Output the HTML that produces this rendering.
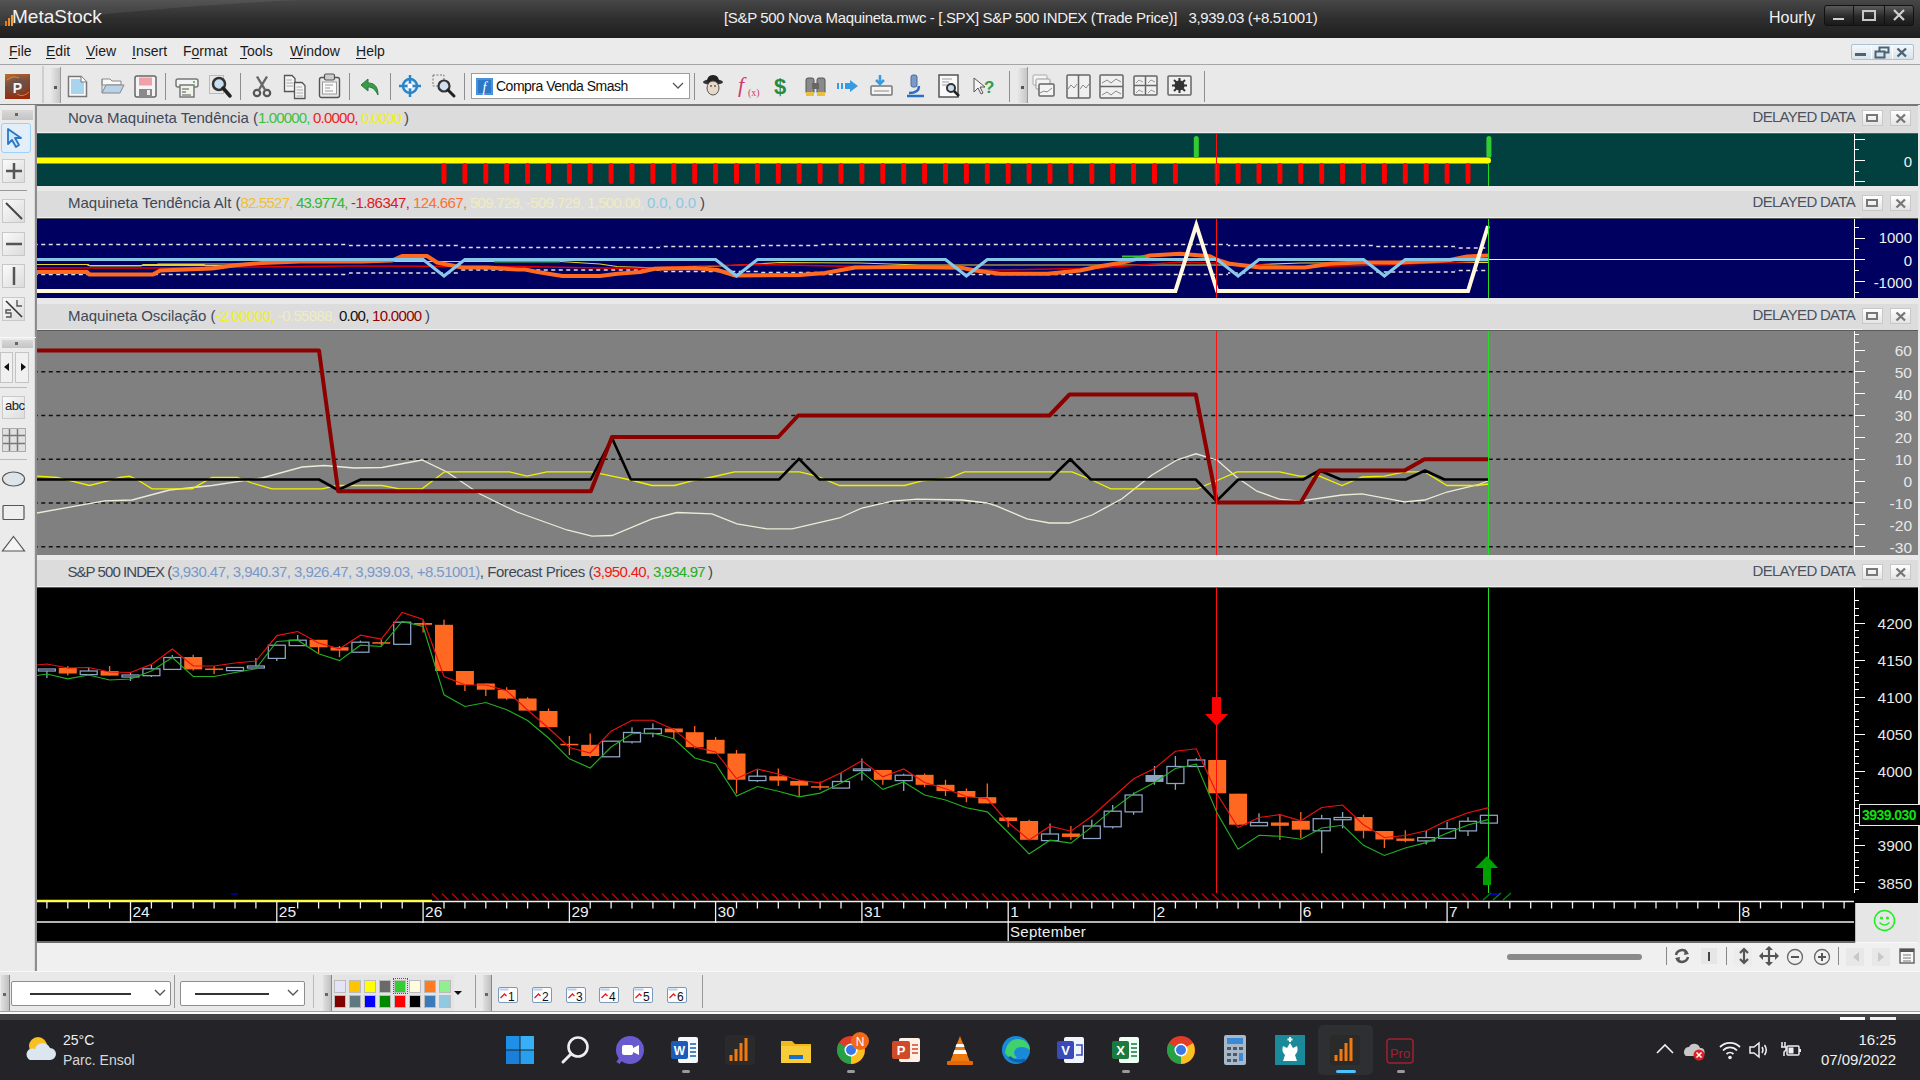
<!DOCTYPE html><html><head><meta charset="utf-8"><title>MetaStock</title><style>
*{margin:0;padding:0;box-sizing:border-box}
html,body{width:1920px;height:1080px;overflow:hidden;background:#e9e9e9;font-family:"Liberation Sans",sans-serif}
body{position:relative}
.a{position:absolute}
.t{position:absolute;white-space:nowrap;line-height:1}
u{text-decoration:underline;text-underline-offset:2px}
svg{position:absolute;overflow:visible}
</style></head><body>
<div class="a" style="left:0px;top:0px;width:1920px;height:38px;background:linear-gradient(#474747,#2e2e2e 50%,#1f1f1f)"></div>
<svg style="left:0;top:0" width="1920" height="38"><path d="M0 0 H300 Q160 6 0 26 Z" fill="#ffffff" opacity="0.07"/></svg>
<svg style="left:5px;top:12px" width="10" height="14"><rect x="0" y="9" width="2" height="5" fill="#e07a10"/><rect x="3" y="6" width="2" height="8" fill="#f08a20"/><rect x="6" y="3" width="2" height="11" fill="#f5a030"/></svg>
<div class="t" style="left:12px;top:7px;font-size:19px;color:#f2f2f2;">MetaStock</div>
<div class="t" style="left:724px;top:10px;font-size:15px;color:#f0f0f0;letter-spacing:-0.35px">[S&amp;P 500 Nova Maquineta.mwc - [.SPX] S&amp;P 500 INDEX (Trade Price)]&nbsp;&nbsp; 3,939.03 (+8.51001)</div>
<div class="t" style="left:1769px;top:10px;font-size:16px;color:#f0f0f0;">Hourly</div>
<div class="a" style="left:1824px;top:5px;width:90px;height:21px;border:1px solid #111;border-radius:3px;background:linear-gradient(#5a5a5a,#2a2a2a 55%,#1a1a1a)"></div>
<div class="a" style="left:1853px;top:6px;width:1px;height:19px;background:#111"></div>
<div class="a" style="left:1884px;top:6px;width:1px;height:19px;background:#111"></div>
<div class="a" style="left:1833px;top:18px;width:11px;height:2px;background:#d0d0d0"></div>
<div class="a" style="left:1862px;top:10px;width:14px;height:11px;border:2px solid #c8c8c8"></div>
<svg style="left:1893px;top:9px" width="12" height="12"><path d="M1 1L11 11M11 1L1 11" stroke="#d0d0d0" stroke-width="2.2"/></svg>
<div class="a" style="left:0px;top:38px;width:1920px;height:26px;background:#ebebeb"></div>
<div class="t" style="left:9px;top:44px;font-size:14px;color:#1a1a1a;"><u>F</u>ile</div>
<div class="t" style="left:46px;top:44px;font-size:14px;color:#1a1a1a;"><u>E</u>dit</div>
<div class="t" style="left:86px;top:44px;font-size:14px;color:#1a1a1a;"><u>V</u>iew</div>
<div class="t" style="left:132px;top:44px;font-size:14px;color:#1a1a1a;"><u>I</u>nsert</div>
<div class="t" style="left:183px;top:44px;font-size:14px;color:#1a1a1a;">F<u>o</u>rmat</div>
<div class="t" style="left:240px;top:44px;font-size:14px;color:#1a1a1a;"><u>T</u>ools</div>
<div class="t" style="left:290px;top:44px;font-size:14px;color:#1a1a1a;"><u>W</u>indow</div>
<div class="t" style="left:356px;top:44px;font-size:14px;color:#1a1a1a;"><u>H</u>elp</div>
<div class="a" style="left:1851px;top:44px;width:63px;height:16px;border:1px solid #a9c2d4;border-radius:2px;background:linear-gradient(#f4f8fb,#d6e3ec)"></div>
<div class="a" style="left:1871px;top:45px;width:1px;height:14px;background:#fff"></div>
<div class="a" style="left:1892px;top:45px;width:1px;height:14px;background:#fff"></div>
<div class="a" style="left:1855px;top:53px;width:11px;height:3px;background:#4c6272"></div>
<svg style="left:1874px;top:46px" width="16" height="13"><rect x="5.5" y="1.5" width="9" height="5" fill="none" stroke="#4c6272" stroke-width="2"/><rect x="1.5" y="5.5" width="9" height="6" fill="#d8e4ec" stroke="#4c6272" stroke-width="2"/></svg>
<svg style="left:1896px;top:47px" width="12" height="11"><path d="M1.5 1.5L10 9.5M10 1.5L1.5 9.5" stroke="#4c6272" stroke-width="2.4"/></svg>
<div class="a" style="left:0px;top:64px;width:1920px;height:1px;background:#a6a6a6"></div>
<div class="a" style="left:0px;top:65px;width:1920px;height:39px;background:#e9e9e9"></div>
<div class="a" style="left:0px;top:104px;width:1920px;height:1px;background:#7a7a7a"></div>
<svg style="left:5px;top:74px" width="25" height="25"><defs><linearGradient id="pg" x1="0" y1="0" x2="0.3" y2="1"><stop offset="0" stop-color="#c46a28"/><stop offset="0.5" stop-color="#7a4a38"/><stop offset="1" stop-color="#9a2a0a"/></linearGradient><radialGradient id="pg2" cx="0.5" cy="0.45" r="0.5"><stop offset="0" stop-color="#505050" stop-opacity="0.9"/><stop offset="1" stop-color="#606060" stop-opacity="0"/></radialGradient></defs><rect width="25" height="25" fill="url(#pg)"/><rect width="25" height="25" fill="url(#pg2)"/><path d="M2 6Q8 1 14 4M12 20Q18 24 24 18" stroke="#e8a060" stroke-width="1" fill="none" opacity=".7"/><text x="12.5" y="18.5" font-family="Liberation Sans" font-weight="bold" font-size="14" fill="#f4f4f4" text-anchor="middle">P</text></svg>
<div class="a" style="left:42px;top:66px;width:2px;height:37px;background:#cfcfcf"></div>
<div class="a" style="left:51px;top:68px;width:9px;height:35px;background:linear-gradient(90deg,#e6e6e6,#c6c6c6)"></div>
<div class="a" style="left:54px;top:86px;width:3px;height:3px;background:#555"></div>
<div class="a" style="left:60px;top:67px;width:1px;height:36px;background:#9a9a9a"></div>
<svg style="left:67px;top:75px" width="26" height="26"><path d="M1.5 1.5H14L19.5 7V21.5H1.5Z" fill="#fafafa" stroke="#777" stroke-width="1.5"/><path d="M4 4H13L17 8V19H4Z" fill="#a8d4ee"/><path d="M14 1.5V7H19.5" fill="#fff" stroke="#777" stroke-width="1"/></svg>
<svg style="left:101px;top:77px" width="26" height="26"><path d="M1 2H9L11 4H20V8H1Z" fill="#f8f8f8" stroke="#888" stroke-width="1"/><path d="M1 16L5 8H23L19 16Z" fill="#b8d2e8" stroke="#888" stroke-width="1"/><path d="M1 2V16" stroke="#888"/></svg>
<svg style="left:134px;top:75px" width="26" height="26"><rect x="1" y="1" width="21" height="21" rx="2" fill="#f4f4f4" stroke="#666" stroke-width="1.5"/><rect x="5" y="2.5" width="13" height="8" fill="#f0a0a8"/><rect x="5" y="14" width="13" height="7" fill="#8a8a8a"/><rect x="13" y="15" width="3" height="5" fill="#eee"/></svg>
<svg style="left:175px;top:76px" width="26" height="26"><rect x="1" y="3" width="22" height="8" rx="2" fill="#f4f4f4" stroke="#777" stroke-width="1.5"/><rect x="5" y="9" width="14" height="12" fill="#eef5e8" stroke="#777" stroke-width="1.5"/><path d="M7 13H14M7 16H11M7 19H16" stroke="#555" stroke-width="1"/><rect x="18" y="5" width="2" height="2" fill="#5c5"/></svg>
<svg style="left:209px;top:75px" width="26" height="26"><rect x="0.5" y="0.5" width="14" height="18" fill="#e8e8e8" stroke="#bbb"/><circle cx="10" cy="9" r="6" fill="#c8dff0" stroke="#333" stroke-width="2.5"/><path d="M14 13L21 21" stroke="#222" stroke-width="3.5" stroke-linecap="round"/></svg>
<svg style="left:252px;top:75px" width="26" height="26"><circle cx="5" cy="18" r="3.2" fill="none" stroke="#555" stroke-width="2.2"/><circle cx="15" cy="18" r="3.2" fill="none" stroke="#555" stroke-width="2.2"/><path d="M6.5 15.5L15 1.5M13.5 15.5L5 1.5" stroke="#666" stroke-width="2.4"/></svg>
<svg style="left:283px;top:74px" width="26" height="26"><path d="M1.5 1.5H9L12 4.5V17.5H1.5Z" fill="#f4f4f4" stroke="#555" stroke-width="1.3"/><path d="M3.5 6H9M3.5 9H10M3.5 12H10" stroke="#aaa"/><path d="M11.5 8.5H19L22 11.5V24.5H11.5Z" fill="#f4f4f4" stroke="#555" stroke-width="1.3"/><path d="M13.5 13H19M13.5 16H20M13.5 19H20M13.5 22H20" stroke="#aaa"/></svg>
<svg style="left:318px;top:73px" width="26" height="26"><rect x="1.5" y="4.5" width="20" height="20" rx="2" fill="#e8e8e8" stroke="#555" stroke-width="1.4"/><rect x="6.5" y="1" width="10" height="6" rx="1.5" fill="#ccc" stroke="#555" stroke-width="1.2"/><rect x="4.5" y="9" width="14" height="12" fill="#fafafa" stroke="#999"/><path d="M7 12H15M7 15H12M7 18H15" stroke="#999"/></svg>
<svg style="left:360px;top:76px" width="26" height="26"><path d="M18 19C18 10 14 7 8 7V3L1 9L8 15V11C12 11 15 13 18 19Z" fill="#3a9a4a" stroke="#2a7a3a" stroke-width="1"/></svg>
<svg style="left:399px;top:74px" width="26" height="26"><circle cx="11" cy="12" r="7" fill="#e0eef8" stroke="#2a84c8" stroke-width="2.5"/><path d="M11 1V23M0 12H22" stroke="#2a84c8" stroke-width="2.5"/><circle cx="11" cy="12" r="2.5" fill="#fff"/></svg>
<svg style="left:432px;top:74px" width="26" height="26"><rect x="1" y="1" width="11" height="11" fill="none" stroke="#777" stroke-dasharray="2 1.5"/><circle cx="12" cy="12" r="5.5" fill="#cfe0ee" stroke="#333" stroke-width="2.2"/><path d="M16 16L22 22" stroke="#222" stroke-width="3" stroke-linecap="round"/></svg>
<div class="a" style="left:165px;top:73px;width:1px;height:27px;background:#8e8e8e"></div>
<div class="a" style="left:240px;top:73px;width:1px;height:27px;background:#8e8e8e"></div>
<div class="a" style="left:349px;top:73px;width:1px;height:27px;background:#8e8e8e"></div>
<div class="a" style="left:390px;top:73px;width:1px;height:27px;background:#8e8e8e"></div>
<div class="a" style="left:464px;top:73px;width:1px;height:27px;background:#8e8e8e"></div>
<div class="a" style="left:471px;top:73px;width:219px;height:26px;background:#fff;border:1px solid #9c9c9c"></div>
<svg style="left:476px;top:78px" width="17" height="17"><rect width="17" height="17" fill="#2c78c8"/><rect x="1" y="1" width="15" height="15" fill="none" stroke="#6aa8e8" stroke-width="1"/><text x="8.5" y="14" font-family="Liberation Serif" font-style="italic" font-size="14" fill="#fff" text-anchor="middle">f</text></svg>
<div class="t" style="left:496px;top:79px;font-size:14px;color:#111;letter-spacing:-0.5px">Compra Venda Smash</div>
<svg style="left:672px;top:82px" width="12" height="8"><path d="M1 1L6 6L11 1" fill="none" stroke="#555" stroke-width="1.3"/></svg>
<div class="a" style="left:694px;top:73px;width:1px;height:27px;background:#8e8e8e"></div>
<svg style="left:702px;top:74px" width="26" height="26"><ellipse cx="11" cy="8" rx="10" ry="3" fill="#333"/><path d="M5 8Q5 1 11 1Q17 1 17 8Z" fill="#222"/><ellipse cx="11" cy="14" rx="6" ry="7" fill="#e8d8c8" stroke="#555"/><path d="M8 12H10M12 12H14" stroke="#222"/></svg>
<svg style="left:737px;top:74px" width="26" height="26"><text x="1" y="18" font-family="Liberation Serif" font-style="italic" font-size="22" fill="#d03a6a">f</text><text x="11" y="22" font-family="Liberation Serif" font-size="10" fill="#d03a6a">(x)</text></svg>
<svg style="left:772px;top:74px" width="26" height="26"><text x="2" y="20" font-family="Liberation Sans" font-weight="bold" font-size="22" fill="#2a8a3a">$</text></svg>
<svg style="left:804px;top:74px" width="26" height="26"><rect x="2" y="4" width="8" height="16" rx="2" fill="#8a8a8a" stroke="#555"/><rect x="13" y="4" width="8" height="16" rx="2" fill="#8a8a8a" stroke="#555"/><rect x="8" y="9" width="7" height="6" fill="#666"/><rect x="2" y="18" width="8" height="4" fill="#e8c040"/><rect x="13" y="18" width="8" height="4" fill="#e8c040"/></svg>
<svg style="left:836px;top:74px" width="26" height="26"><path d="M1 9H3V15H1ZM5 9H7V15H5ZM9 9H14V6L22 12L14 18V15H9Z" fill="#3a9ae0"/></svg>
<svg style="left:870px;top:74px" width="26" height="26"><path d="M10 1V9M6 6L10 10L14 6" stroke="#3a9ae0" stroke-width="2.5" fill="none"/><rect x="1" y="12" width="21" height="9" rx="1" fill="#f4f4f4" stroke="#777" stroke-width="1.5"/><path d="M4 17H19" stroke="#888"/></svg>
<svg style="left:904px;top:74px" width="26" height="26"><rect x="7" y="1" width="6" height="12" rx="2" fill="#7a9ac8" stroke="#4a6a9a"/><path d="M3 22H20M5 19Q15 19 15 12" stroke="#2a70c0" stroke-width="2.5" fill="none"/></svg>
<svg style="left:938px;top:74px" width="26" height="26"><rect x="1" y="1" width="19" height="22" fill="#fafafa" stroke="#555" stroke-width="1.5"/><path d="M4 5H14M4 8H11M4 11H9" stroke="#99a"/><circle cx="13" cy="14" r="4" fill="#c8dff0" stroke="#333" stroke-width="2"/><path d="M16 17L21 22" stroke="#222" stroke-width="2.5"/></svg>
<svg style="left:972px;top:74px" width="26" height="26"><path d="M2 4L2 18L6 14L9 20L11 19L8 13H13Z" fill="#f4f4f4" stroke="#555" stroke-width="1"/><text x="12" y="19" font-family="Liberation Sans" font-weight="bold" font-size="17" fill="#3a9a3a">?</text></svg>
<div class="a" style="left:1009px;top:71px;width:1px;height:31px;background:#8e8e8e"></div>
<div class="a" style="left:1018px;top:68px;width:9px;height:35px;background:linear-gradient(90deg,#e6e6e6,#c6c6c6)"></div>
<div class="a" style="left:1021px;top:86px;width:3px;height:3px;background:#555"></div>
<div class="a" style="left:1027px;top:67px;width:1px;height:36px;background:#9a9a9a"></div>
<svg style="left:1032px;top:74px" width="26" height="26"><rect x="1" y="1" width="14" height="10" rx="1" fill="#f4f4f4" stroke="#aaa"/><rect x="4" y="5" width="14" height="10" rx="1" fill="#f4f4f4" stroke="#999"/><rect x="7" y="10" width="15" height="12" rx="1" fill="#f4f4f4" stroke="#666" stroke-width="1.5"/><path d="M8 19L12 17L15 18L20 14" stroke="#888" fill="none"/></svg>
<svg style="left:1066px;top:74px" width="26" height="26"><rect x="1" y="1" width="23" height="23" rx="1" fill="#f0f0f0" stroke="#666" stroke-width="1.5"/><path d="M12.5 1V24" stroke="#666" stroke-width="1.5"/><path d="M2 15L5 11L8 14L11 10M14 15L17 11L20 14L23 10" stroke="#888" fill="none"/></svg>
<svg style="left:1099px;top:74px" width="26" height="26"><rect x="1" y="1" width="23" height="23" rx="1" fill="#f0f0f0" stroke="#666" stroke-width="1.5"/><path d="M1 12.5H24" stroke="#666" stroke-width="1.5"/><path d="M3 9L8 6L12 9L17 5L22 8M3 21L8 18L12 21L17 17L22 20" stroke="#888" fill="none"/></svg>
<svg style="left:1133px;top:75px" width="26" height="26"><rect x="1" y="1" width="23" height="19" rx="1" fill="#f0f0f0" stroke="#666" stroke-width="1.5"/><path d="M12.5 1V20M1 10.5H24" stroke="#666" stroke-width="1.5"/><path d="M3 8L6 5L10 7M15 8L18 5L22 7M3 18L6 15L10 17M15 18L18 15L22 17" stroke="#999" fill="none"/></svg>
<svg style="left:1167px;top:75px" width="26" height="26"><rect x="1" y="1" width="23" height="19" rx="1" fill="#f0f0f0" stroke="#666" stroke-width="1.5"/><circle cx="12.5" cy="10.5" r="5" fill="#333"/><circle cx="12.5" cy="10.5" r="2" fill="#f0f0f0"/><path d="M12.5 3V18M5 10.5H20M7 5L18 16M18 5L7 16" stroke="#333" stroke-width="2"/></svg>
<div class="a" style="left:1204px;top:71px;width:1px;height:31px;background:#8e8e8e"></div>
<div class="a" style="left:0px;top:105px;width:36px;height:866px;background:#ebebeb"></div>
<div class="a" style="left:34px;top:105px;width:1px;height:866px;background:#dadada"></div>
<div class="a" style="left:35px;top:105px;width:2px;height:866px;background:#8d8d8d"></div>
<div class="a" style="left:2px;top:110px;width:31px;height:10px;background:linear-gradient(#d8d8d8,#c4c4c4)"></div>
<div class="a" style="left:15px;top:113px;width:3px;height:3px;background:#666"></div>
<div class="a" style="left:1px;top:123px;width:30px;height:30px;border:1px solid #9fd0f5;border-radius:3px;background:#e2eef8"></div>
<svg style="left:5px;top:127px" width="22" height="22"><path d="M3 2L3 17L7 13L11 20L14 18L10 11L16 11Z" fill="#cfe6f8" stroke="#2a78c8" stroke-width="1.8" stroke-linejoin="round"/></svg>
<div class="a" style="left:2px;top:159px;width:23px;height:24px;border:1px solid #c8c8c8;background:linear-gradient(135deg,#fafafa,#dcdcdc)"></div>
<svg style="left:2px;top:159px" width="24" height="24"><path d="M12 4V20M4 12H20" stroke="#555" stroke-width="2.5"/></svg>
<div class="a" style="left:0px;top:190px;width:27px;height:1px;background:#999"></div>
<div class="a" style="left:2px;top:199px;width:23px;height:24px;border:1px solid #c8c8c8;background:linear-gradient(135deg,#fafafa,#dcdcdc)"></div>
<svg style="left:2px;top:199px" width="24" height="24"><path d="M4 4L20 20" stroke="#444" stroke-width="2"/></svg>
<div class="a" style="left:2px;top:232px;width:23px;height:24px;border:1px solid #c8c8c8;background:linear-gradient(135deg,#fafafa,#dcdcdc)"></div>
<svg style="left:2px;top:232px" width="24" height="24"><path d="M4 12H20" stroke="#555" stroke-width="2.5"/></svg>
<div class="a" style="left:2px;top:264px;width:23px;height:24px;border:1px solid #c8c8c8;background:linear-gradient(135deg,#fafafa,#dcdcdc)"></div>
<svg style="left:2px;top:264px" width="24" height="24"><path d="M12 3V21" stroke="#555" stroke-width="2.5"/></svg>
<div class="a" style="left:2px;top:297px;width:23px;height:24px;border:1px solid #c8c8c8;background:linear-gradient(135deg,#fafafa,#dcdcdc)"></div>
<svg style="left:2px;top:297px" width="24" height="24"><path d="M4 4L20 20" stroke="#333" stroke-width="1.6"/><path d="M15 3V9H20" stroke="#555" stroke-width="1.4" fill="none"/><path d="M9 13H4V16H9V20H4" stroke="#555" stroke-width="1.4" fill="none"/></svg>
<div class="a" style="left:0px;top:337px;width:36px;height:1px;background:#f8f8f8"></div>
<div class="a" style="left:2px;top:340px;width:31px;height:8px;background:linear-gradient(#d8d8d8,#c4c4c4)"></div>
<div class="a" style="left:15px;top:342px;width:3px;height:3px;background:#666"></div>
<div class="a" style="left:0px;top:352px;width:13px;height:31px;border:1px solid #c4c4c4;background:#f0f0f0"></div>
<div class="a" style="left:15px;top:352px;width:14px;height:31px;border:1px solid #c4c4c4;background:#f0f0f0"></div>
<svg style="left:3px;top:362px" width="8" height="10"><path d="M6 1L1 5L6 9Z" fill="#111"/></svg>
<svg style="left:19px;top:362px" width="8" height="10"><path d="M2 1L7 5L2 9Z" fill="#111"/></svg>
<div class="a" style="left:0px;top:387px;width:27px;height:1px;background:#bbb"></div>
<div class="a" style="left:2px;top:396px;width:23px;height:23px;border:1px solid #c8c8c8;background:linear-gradient(135deg,#fafafa,#dcdcdc)"></div>
<div class="t" style="left:5px;top:399px;font-size:13px;color:#222;font-weight:normal;letter-spacing:-0.5px">abc</div>
<div class="a" style="left:2px;top:428px;width:23px;height:23px;background:#e0e0e0"></div>
<svg style="left:2px;top:428px" width="24" height="24"><path d="M0 7.5H24M0 15.5H24M7.5 0V24M15.5 0V24" stroke="#777" stroke-width="1.5"/><rect x="0.5" y="0.5" width="23" height="23" fill="none" stroke="#aaa"/></svg>
<div class="a" style="left:0px;top:459px;width:27px;height:1px;background:#bbb"></div>
<svg style="left:1px;top:471px" width="26" height="17"><ellipse cx="12.5" cy="8" rx="11" ry="7" fill="#dde4ea" stroke="#555" stroke-width="1.2"/></svg>
<svg style="left:1px;top:504px" width="26" height="18"><rect x="2" y="1.5" width="21" height="14" rx="1" fill="#eee" stroke="#555" stroke-width="1.2"/></svg>
<svg style="left:1px;top:535px" width="26" height="18"><path d="M12.5 1.5L23.5 16H1.5Z" fill="#f4f4f4" stroke="#555" stroke-width="1.2"/></svg>
<div class="a" style="left:37px;top:105px;width:1883px;height:838px;background:#e6e6e6"></div>
<div class="a" style="left:37px;top:105px;width:1881px;height:1px;background:#777"></div>
<div class="a" style="left:1918px;top:105px;width:2px;height:838px;background:#e8e8e8"></div>
<div class="a" style="left:37px;top:106px;width:1881px;height:27px;background:#dcdcdc"></div>
<div class="a" style="left:37px;top:132px;width:1825px;height:1px;background:#f0f0f0"></div>
<div class="a" style="left:37px;top:133px;width:1881px;height:1px;background:#5a5a5a"></div>
<div class="a" style="left:37px;top:134px;width:1881px;height:52px;background:#023f3f"></div>
<div class="t" style="left:1752.5px;top:109.3px;font-size:15px;color:#4a5260;letter-spacing:-0.7px">DELAYED DATA</div>
<div class="a" style="left:1862px;top:110px;width:21px;height:16px;border:1px solid #c8c8c8;background:linear-gradient(#fff,#e4e4e4)"></div>
<div class="a" style="left:1866px;top:114px;width:12px;height:8px;border:2px solid #777"></div>
<div class="a" style="left:1890px;top:110px;width:21px;height:16px;border:1px solid #c8c8c8;background:linear-gradient(#fff,#e4e4e4)"></div>
<svg style="left:1894px;top:113px" width="14" height="11"><path d="M2.5 1.5L11 9.5M11 1.5L2.5 9.5" stroke="#777" stroke-width="2.4"/></svg>
<div class="a" style="left:37px;top:186px;width:1881px;height:5px;background:#e8e8e8"></div>
<div class="a" style="left:37px;top:191px;width:1881px;height:27px;background:#dcdcdc"></div>
<div class="a" style="left:37px;top:217px;width:1825px;height:1px;background:#f0f0f0"></div>
<div class="a" style="left:37px;top:218px;width:1881px;height:1px;background:#5a5a5a"></div>
<div class="a" style="left:37px;top:219px;width:1881px;height:79px;background:#000060"></div>
<div class="t" style="left:1752.5px;top:194.3px;font-size:15px;color:#4a5260;letter-spacing:-0.7px">DELAYED DATA</div>
<div class="a" style="left:1862px;top:195px;width:21px;height:16px;border:1px solid #c8c8c8;background:linear-gradient(#fff,#e4e4e4)"></div>
<div class="a" style="left:1866px;top:199px;width:12px;height:8px;border:2px solid #777"></div>
<div class="a" style="left:1890px;top:195px;width:21px;height:16px;border:1px solid #c8c8c8;background:linear-gradient(#fff,#e4e4e4)"></div>
<svg style="left:1894px;top:198px" width="14" height="11"><path d="M2.5 1.5L11 9.5M11 1.5L2.5 9.5" stroke="#777" stroke-width="2.4"/></svg>
<div class="a" style="left:37px;top:299px;width:1881px;height:5px;background:#e8e8e8"></div>
<div class="a" style="left:37px;top:304px;width:1881px;height:26px;background:#dcdcdc"></div>
<div class="a" style="left:37px;top:329px;width:1825px;height:1px;background:#f0f0f0"></div>
<div class="a" style="left:37px;top:330px;width:1881px;height:1px;background:#5a5a5a"></div>
<div class="a" style="left:37px;top:331px;width:1881px;height:224px;background:#808080"></div>
<div class="t" style="left:1752.5px;top:307.3px;font-size:15px;color:#4a5260;letter-spacing:-0.7px">DELAYED DATA</div>
<div class="a" style="left:1862px;top:308px;width:21px;height:16px;border:1px solid #c8c8c8;background:linear-gradient(#fff,#e4e4e4)"></div>
<div class="a" style="left:1866px;top:312px;width:12px;height:8px;border:2px solid #777"></div>
<div class="a" style="left:1890px;top:308px;width:21px;height:16px;border:1px solid #c8c8c8;background:linear-gradient(#fff,#e4e4e4)"></div>
<svg style="left:1894px;top:311px" width="14" height="11"><path d="M2.5 1.5L11 9.5M11 1.5L2.5 9.5" stroke="#777" stroke-width="2.4"/></svg>
<div class="a" style="left:37px;top:555px;width:1881px;height:5px;background:#e8e8e8"></div>
<div class="a" style="left:37px;top:560px;width:1881px;height:27px;background:#dcdcdc"></div>
<div class="a" style="left:37px;top:586px;width:1825px;height:1px;background:#f0f0f0"></div>
<div class="a" style="left:37px;top:587px;width:1881px;height:1px;background:#5a5a5a"></div>
<div class="a" style="left:37px;top:588px;width:1881px;height:353px;background:#000000"></div>
<div class="t" style="left:1752.5px;top:563.3px;font-size:15px;color:#4a5260;letter-spacing:-0.7px">DELAYED DATA</div>
<div class="a" style="left:1862px;top:564px;width:21px;height:16px;border:1px solid #c8c8c8;background:linear-gradient(#fff,#e4e4e4)"></div>
<div class="a" style="left:1866px;top:568px;width:12px;height:8px;border:2px solid #777"></div>
<div class="a" style="left:1890px;top:564px;width:21px;height:16px;border:1px solid #c8c8c8;background:linear-gradient(#fff,#e4e4e4)"></div>
<svg style="left:1894px;top:567px" width="14" height="11"><path d="M2.5 1.5L11 9.5M11 1.5L2.5 9.5" stroke="#777" stroke-width="2.4"/></svg>
<div class="t" style="left:68px;top:109.5px;font-size:15px;color:#3f4856;letter-spacing:-0.026px">Nova Maquineta Tendência (</div>
<div class="t" style="left:258px;top:109.5px;font-size:15px;color:#3cc03c;letter-spacing:-0.84px">1.00000, </div>
<div class="t" style="left:313px;top:109.5px;font-size:15px;color:#f02020;letter-spacing:-0.777px">0.0000, </div>
<div class="t" style="left:361px;top:109.5px;font-size:15px;color:#f0f020;letter-spacing:-1.0px">0.0000 </div>
<div class="t" style="left:404px;top:109.5px;font-size:15px;color:#3f4856;letter-spacing:0.6px">)</div>
<div class="t" style="left:68px;top:194.5px;font-size:15px;color:#3f4856;letter-spacing:0.006px">Maquineta Tendência Alt (</div>
<div class="t" style="left:240.5px;top:194.5px;font-size:15px;color:#f0c030;letter-spacing:-0.785px">82.5527, </div>
<div class="t" style="left:296px;top:194.5px;font-size:15px;color:#30b830;letter-spacing:-0.84px">43.9774, </div>
<div class="t" style="left:351px;top:194.5px;font-size:15px;color:#e01818;letter-spacing:-0.556px">-1.86347, </div>
<div class="t" style="left:413px;top:194.5px;font-size:15px;color:#ff7030;letter-spacing:-0.618px">124.667, </div>
<div class="t" style="left:470px;top:194.5px;font-size:15px;color:#f0ecc0;letter-spacing:-0.729px">509.729, </div>
<div class="t" style="left:526px;top:194.5px;font-size:15px;color:#f0ecc0;letter-spacing:-0.656px">-509.729, </div>
<div class="t" style="left:587px;top:194.5px;font-size:15px;color:#f0ecc0;letter-spacing:-0.673px">1,500.00, </div>
<div class="t" style="left:647px;top:194.5px;font-size:15px;color:#8cc8e4;letter-spacing:-0.135px">0.0, 0.0 </div>
<div class="t" style="left:700px;top:194.5px;font-size:15px;color:#3f4856;letter-spacing:0.0px">)</div>
<div class="t" style="left:68px;top:307.5px;font-size:15px;color:#3f4856;letter-spacing:-0.093px">Maquineta Oscilação (</div>
<div class="t" style="left:215.3px;top:307.5px;font-size:15px;color:#f0f020;letter-spacing:-0.506px">-2.00000, </div>
<div class="t" style="left:277.8px;top:307.5px;font-size:15px;color:#f0ecc0;letter-spacing:-0.636px">-0.55888, </div>
<div class="t" style="left:339px;top:307.5px;font-size:15px;color:#101010;letter-spacing:-0.755px">0.00, </div>
<div class="t" style="left:372px;top:307.5px;font-size:15px;color:#900000;letter-spacing:-0.674px">10.0000 </div>
<div class="t" style="left:425px;top:307.5px;font-size:15px;color:#3f4856;letter-spacing:0.5px">)</div>
<div class="t" style="left:67.5px;top:563.5px;font-size:15px;color:#3f4856;letter-spacing:-0.948px">S&amp;P 500 INDEX (</div>
<div class="t" style="left:171.4px;top:563.5px;font-size:15px;color:#7898c8;letter-spacing:-0.54px">3,930.47, 3,940.37, 3,926.47, 3,939.03, +8.51001)</div>
<div class="t" style="left:479.8px;top:563.5px;font-size:15px;color:#3f4856;letter-spacing:-0.448px">, Forecast Prices (</div>
<div class="t" style="left:593px;top:563.5px;font-size:15px;color:#f01818;letter-spacing:-0.673px">3,950.40, </div>
<div class="t" style="left:653px;top:563.5px;font-size:15px;color:#20b020;letter-spacing:-0.84px">3,934.97 </div>
<div class="t" style="left:708px;top:563.5px;font-size:15px;color:#3f4856;letter-spacing:0.6px">)</div>
<div class="t" style="left:1850px;width:62px;text-align:right;top:154px;font-size:15px;color:#f0f0f0">0</div>
<div class="t" style="left:1850px;width:62px;text-align:right;top:230px;font-size:15px;color:#f0f0f0">1000</div>
<div class="t" style="left:1850px;width:62px;text-align:right;top:252.5px;font-size:15px;color:#f0f0f0">0</div>
<div class="t" style="left:1850px;width:62px;text-align:right;top:275px;font-size:15px;color:#f0f0f0">-1000</div>
<div class="t" style="left:1850px;width:62px;text-align:right;top:342.9px;font-size:15.5px;color:#e8e8e8">60</div>
<div class="t" style="left:1850px;width:62px;text-align:right;top:364.8px;font-size:15.5px;color:#e8e8e8">50</div>
<div class="t" style="left:1850px;width:62px;text-align:right;top:386.6px;font-size:15.5px;color:#e8e8e8">40</div>
<div class="t" style="left:1850px;width:62px;text-align:right;top:408.4px;font-size:15.5px;color:#e8e8e8">30</div>
<div class="t" style="left:1850px;width:62px;text-align:right;top:430.3px;font-size:15.5px;color:#e8e8e8">20</div>
<div class="t" style="left:1850px;width:62px;text-align:right;top:452.1px;font-size:15.5px;color:#e8e8e8">10</div>
<div class="t" style="left:1850px;width:62px;text-align:right;top:474.0px;font-size:15.5px;color:#e8e8e8">0</div>
<div class="t" style="left:1850px;width:62px;text-align:right;top:495.9px;font-size:15.5px;color:#e8e8e8">-10</div>
<div class="t" style="left:1850px;width:62px;text-align:right;top:517.7px;font-size:15.5px;color:#e8e8e8">-20</div>
<div class="t" style="left:1850px;width:62px;text-align:right;top:539.5px;font-size:15.5px;color:#e8e8e8">-30</div>
<div class="t" style="left:1850px;width:62px;text-align:right;top:616.0px;font-size:15.5px;color:#e8e8e8">4200</div>
<div class="t" style="left:1850px;width:62px;text-align:right;top:653.1px;font-size:15.5px;color:#e8e8e8">4150</div>
<div class="t" style="left:1850px;width:62px;text-align:right;top:690.1px;font-size:15.5px;color:#e8e8e8">4100</div>
<div class="t" style="left:1850px;width:62px;text-align:right;top:727.2px;font-size:15.5px;color:#e8e8e8">4050</div>
<div class="t" style="left:1850px;width:62px;text-align:right;top:764.3px;font-size:15.5px;color:#e8e8e8">4000</div>
<div class="t" style="left:1850px;width:62px;text-align:right;top:838.4px;font-size:15.5px;color:#e8e8e8">3900</div>
<div class="t" style="left:1850px;width:62px;text-align:right;top:875.5px;font-size:15.5px;color:#e8e8e8">3850</div>
<div class="t" style="left:132.5px;top:904px;font-size:15.5px;color:#f0f0f0">24</div>
<div class="t" style="left:278.8px;top:904px;font-size:15.5px;color:#f0f0f0">25</div>
<div class="t" style="left:425.1px;top:904px;font-size:15.5px;color:#f0f0f0">26</div>
<div class="t" style="left:571.4px;top:904px;font-size:15.5px;color:#f0f0f0">29</div>
<div class="t" style="left:717.6px;top:904px;font-size:15.5px;color:#f0f0f0">30</div>
<div class="t" style="left:863.9px;top:904px;font-size:15.5px;color:#f0f0f0">31</div>
<div class="t" style="left:1010.2px;top:904px;font-size:15.5px;color:#f0f0f0">1</div>
<div class="t" style="left:1156.5px;top:904px;font-size:15.5px;color:#f0f0f0">2</div>
<div class="t" style="left:1302.8px;top:904px;font-size:15.5px;color:#f0f0f0">6</div>
<div class="t" style="left:1449.1px;top:904px;font-size:15.5px;color:#f0f0f0">7</div>
<div class="t" style="left:1741.6px;top:904px;font-size:15.5px;color:#f0f0f0">8</div>
<div class="t" style="left:1010px;top:924px;font-size:15px;color:#f0f0f0;letter-spacing:0.3px">September</div>
<div class="a" style="left:1855px;top:903px;width:63px;height:40px;background:#e6e6e6;border-left:1px solid #bbb;border-bottom:1px solid #fafafa"></div>
<svg style="left:1872px;top:908px" width="26" height="26"><circle cx="12.5" cy="12.5" r="10" fill="none" stroke="#22ee22" stroke-width="1.5"/><circle cx="9.5" cy="10" r="1.6" fill="#22ee22"/><circle cx="15.5" cy="10" r="1.6" fill="#22ee22"/><path d="M7.5 14.5Q12.5 19.5 17.5 14.5" stroke="#22ee22" stroke-width="1.5" fill="none"/></svg>
<svg style="left:0;top:0" width="1920" height="1080"><rect x="37" y="157.5" width="1451" height="6" fill="#ffff00"/><circle cx="1488" cy="160.5" r="3" fill="#ffff00"/><rect x="441.5" y="163" width="5" height="21" rx="2.5" fill="#ff0000"/><rect x="462.4" y="163" width="5" height="21" rx="2.5" fill="#ff0000"/><rect x="483.3" y="163" width="5" height="21" rx="2.5" fill="#ff0000"/><rect x="504.2" y="163" width="5" height="21" rx="2.5" fill="#ff0000"/><rect x="525.1" y="163" width="5" height="21" rx="2.5" fill="#ff0000"/><rect x="546.0" y="163" width="5" height="21" rx="2.5" fill="#ff0000"/><rect x="566.9" y="163" width="5" height="21" rx="2.5" fill="#ff0000"/><rect x="587.7" y="163" width="5" height="21" rx="2.5" fill="#ff0000"/><rect x="608.6" y="163" width="5" height="21" rx="2.5" fill="#ff0000"/><rect x="629.5" y="163" width="5" height="21" rx="2.5" fill="#ff0000"/><rect x="650.4" y="163" width="5" height="21" rx="2.5" fill="#ff0000"/><rect x="671.3" y="163" width="5" height="21" rx="2.5" fill="#ff0000"/><rect x="692.2" y="163" width="5" height="21" rx="2.5" fill="#ff0000"/><rect x="713.1" y="163" width="5" height="21" rx="2.5" fill="#ff0000"/><rect x="734.0" y="163" width="5" height="21" rx="2.5" fill="#ff0000"/><rect x="754.9" y="163" width="5" height="21" rx="2.5" fill="#ff0000"/><rect x="775.8" y="163" width="5" height="21" rx="2.5" fill="#ff0000"/><rect x="796.7" y="163" width="5" height="21" rx="2.5" fill="#ff0000"/><rect x="817.6" y="163" width="5" height="21" rx="2.5" fill="#ff0000"/><rect x="838.5" y="163" width="5" height="21" rx="2.5" fill="#ff0000"/><rect x="859.4" y="163" width="5" height="21" rx="2.5" fill="#ff0000"/><rect x="880.3" y="163" width="5" height="21" rx="2.5" fill="#ff0000"/><rect x="901.2" y="163" width="5" height="21" rx="2.5" fill="#ff0000"/><rect x="922.1" y="163" width="5" height="21" rx="2.5" fill="#ff0000"/><rect x="943.0" y="163" width="5" height="21" rx="2.5" fill="#ff0000"/><rect x="963.9" y="163" width="5" height="21" rx="2.5" fill="#ff0000"/><rect x="984.8" y="163" width="5" height="21" rx="2.5" fill="#ff0000"/><rect x="1005.7" y="163" width="5" height="21" rx="2.5" fill="#ff0000"/><rect x="1026.6" y="163" width="5" height="21" rx="2.5" fill="#ff0000"/><rect x="1047.5" y="163" width="5" height="21" rx="2.5" fill="#ff0000"/><rect x="1068.4" y="163" width="5" height="21" rx="2.5" fill="#ff0000"/><rect x="1089.3" y="163" width="5" height="21" rx="2.5" fill="#ff0000"/><rect x="1110.2" y="163" width="5" height="21" rx="2.5" fill="#ff0000"/><rect x="1131.1" y="163" width="5" height="21" rx="2.5" fill="#ff0000"/><rect x="1152.0" y="163" width="5" height="21" rx="2.5" fill="#ff0000"/><rect x="1172.9" y="163" width="5" height="21" rx="2.5" fill="#ff0000"/><rect x="1214.7" y="163" width="5" height="21" rx="2.5" fill="#ff0000"/><rect x="1235.6" y="163" width="5" height="21" rx="2.5" fill="#ff0000"/><rect x="1256.5" y="163" width="5" height="21" rx="2.5" fill="#ff0000"/><rect x="1277.4" y="163" width="5" height="21" rx="2.5" fill="#ff0000"/><rect x="1298.3" y="163" width="5" height="21" rx="2.5" fill="#ff0000"/><rect x="1319.2" y="163" width="5" height="21" rx="2.5" fill="#ff0000"/><rect x="1340.1" y="163" width="5" height="21" rx="2.5" fill="#ff0000"/><rect x="1361.0" y="163" width="5" height="21" rx="2.5" fill="#ff0000"/><rect x="1381.9" y="163" width="5" height="21" rx="2.5" fill="#ff0000"/><rect x="1402.8" y="163" width="5" height="21" rx="2.5" fill="#ff0000"/><rect x="1423.7" y="163" width="5" height="21" rx="2.5" fill="#ff0000"/><rect x="1444.6" y="163" width="5" height="21" rx="2.5" fill="#ff0000"/><rect x="1465.5" y="163" width="5" height="21" rx="2.5" fill="#ff0000"/><rect x="1193.8" y="136" width="5" height="22" rx="2.5" fill="#33cc33"/><rect x="1486.4" y="136" width="5" height="22" rx="2.5" fill="#33cc33"/><line x1="1854.5" y1="134" x2="1854.5" y2="186" stroke="#fff" stroke-width="1"/><line x1="1854" y1="139.5" x2="1865" y2="139.5" stroke="#fff" stroke-width="1"/><line x1="1854" y1="149.5" x2="1859" y2="149.5" stroke="#fff" stroke-width="1"/><line x1="1854" y1="160.5" x2="1865" y2="160.5" stroke="#fff" stroke-width="1"/><line x1="1854" y1="171.5" x2="1859" y2="171.5" stroke="#fff" stroke-width="1"/><line x1="1854" y1="181.5" x2="1865" y2="181.5" stroke="#fff" stroke-width="1"/><line x1="37" y1="244.5" x2="349" y2="244.5" stroke="#e0e0e0" stroke-width="1.5" stroke-dasharray="4 3.5" stroke-dashoffset="3.25"/><line x1="349" y1="245.5" x2="460" y2="245.5" stroke="#e0e0e0" stroke-width="1.5" stroke-dasharray="4 3.5" stroke-dashoffset="0.25"/><line x1="460" y1="247.5" x2="660" y2="247.5" stroke="#e0e0e0" stroke-width="1.5" stroke-dasharray="4 3.5" stroke-dashoffset="6.25"/><line x1="660" y1="246.5" x2="760" y2="246.5" stroke="#e0e0e0" stroke-width="1.5" stroke-dasharray="4 3.5" stroke-dashoffset="3.75"/><line x1="760" y1="245.5" x2="820" y2="245.5" stroke="#e0e0e0" stroke-width="1.5" stroke-dasharray="4 3.5" stroke-dashoffset="6.25"/><line x1="820" y1="244.5" x2="1228" y2="244.5" stroke="#e0e0e0" stroke-width="1.5" stroke-dasharray="4 3.5" stroke-dashoffset="6.25"/><line x1="1228" y1="245.5" x2="1375" y2="245.5" stroke="#e0e0e0" stroke-width="1.5" stroke-dasharray="4 3.5" stroke-dashoffset="1.75"/><line x1="1375" y1="246.5" x2="1455" y2="246.5" stroke="#e0e0e0" stroke-width="1.5" stroke-dasharray="4 3.5" stroke-dashoffset="6.25"/><line x1="1455" y1="248" x2="1488" y2="248" stroke="#e0e0e0" stroke-width="1.5" stroke-dasharray="4 3.5" stroke-dashoffset="3.75"/><line x1="37" y1="274.5" x2="349" y2="274.5" stroke="#e0e0e0" stroke-width="1.5" stroke-dasharray="4 3.5" stroke-dashoffset="3.25"/><line x1="349" y1="273" x2="460" y2="273" stroke="#e0e0e0" stroke-width="1.5" stroke-dasharray="4 3.5" stroke-dashoffset="0.25"/><line x1="460" y1="270" x2="660" y2="270" stroke="#e0e0e0" stroke-width="1.5" stroke-dasharray="4 3.5" stroke-dashoffset="6.25"/><line x1="660" y1="271.5" x2="760" y2="271.5" stroke="#e0e0e0" stroke-width="1.5" stroke-dasharray="4 3.5" stroke-dashoffset="3.75"/><line x1="760" y1="272.5" x2="820" y2="272.5" stroke="#e0e0e0" stroke-width="1.5" stroke-dasharray="4 3.5" stroke-dashoffset="6.25"/><line x1="820" y1="274.5" x2="1228" y2="274.5" stroke="#e0e0e0" stroke-width="1.5" stroke-dasharray="4 3.5" stroke-dashoffset="6.25"/><line x1="1228" y1="273" x2="1375" y2="273" stroke="#e0e0e0" stroke-width="1.5" stroke-dasharray="4 3.5" stroke-dashoffset="1.75"/><line x1="1375" y1="272" x2="1455" y2="272" stroke="#e0e0e0" stroke-width="1.5" stroke-dasharray="4 3.5" stroke-dashoffset="6.25"/><line x1="1455" y1="270.5" x2="1488" y2="270.5" stroke="#e0e0e0" stroke-width="1.5" stroke-dasharray="4 3.5" stroke-dashoffset="3.75"/><polyline points="37.0,264.5 88.0,264.5 88.0,265.5 158.0,265.5 158.0,264.0 249.0,264.0 249.0,265.5 141.0,265.5" fill="none" stroke="#e8d020" stroke-width="1.2" /><polyline points="141.0,265.5 141.0,265.5" fill="none" stroke="#e8d020" stroke-width="1" /><polyline points="37.0,264.5 88.0,264.5 90.0,265.5 158.0,265.5 160.0,264.0 249.0,264.0 251.0,265.5 241.0,265.5" fill="none" stroke="#e8d020" stroke-width="0" /><polyline points="37.0,264.5 88.0,264.5 90.0,266.0 141.0,266.0 143.0,264.5 204.0,264.5 206.0,266.0 241.0,266.0 243.0,264.5 262.0,264.5 262.0,262.5 348.0,262.5 350.0,261.5 560.0,261.5 600.0,264.0 617.0,266.5 645.0,267.5 700.0,267.0 740.0,265.0 780.0,262.5 860.0,263.0 920.0,265.0 1010.0,265.0 1100.0,265.0 1250.0,265.0 1300.0,263.0 1440.0,262.5 1488.0,262.5" fill="none" stroke="#e8d428" stroke-width="1.2" /><polyline points="37.0,268.0 160.0,268.0 200.0,267.5 350.0,266.0 520.0,266.5 600.0,268.0 640.0,268.5 700.0,266.0 760.0,264.5 860.0,266.5 1000.0,270.0 1100.0,268.0 1180.0,262.0 1230.0,263.5 1300.0,267.0 1380.0,265.0 1488.0,261.0" fill="none" stroke="#e00000" stroke-width="1.6" /><polyline points="37.0,272.0 87.0,272.0 89.5,274.5 153.0,274.5 160.0,270.5 212.0,268.5 237.0,265.0 262.0,263.0 300.0,261.5 362.0,261.5 392.0,260.5 402.0,256.0 427.0,256.0 437.0,262.5 462.0,267.5 487.0,267.5 517.0,269.5 525.0,269.5 537.5,272.0 562.5,276.0 600.0,276.0 617.5,273.8 640.0,272.0 655.0,268.8 695.0,268.0 717.5,270.0 735.0,275.5 800.0,275.0 825.0,273.0 855.0,267.5 900.0,267.0 950.0,267.5 960.0,267.5 975.0,270.5 1000.0,273.8 1047.5,273.8 1080.0,270.5 1100.0,266.2 1122.5,262.5 1150.0,255.5 1180.0,253.8 1210.0,256.2 1217.5,260.0 1230.0,263.8 1260.0,267.5 1305.0,267.5 1330.0,263.8 1360.0,262.5 1397.5,262.5 1440.0,260.8 1450.0,260.0 1467.0,256.5 1488.0,255.5" fill="none" stroke="#ff6a20" stroke-width="4" stroke-linejoin="round"/><line x1="1122" y1="256.5" x2="1146" y2="256.5" stroke="#30c030" stroke-width="2"/><line x1="494" y1="261.5" x2="560" y2="261.5" stroke="#30c030" stroke-width="2"/><polyline points="37.0,259.5 423.1,259.5 444.0,276.0 464.9,259.5 715.6,259.5 736.5,276.0 757.4,259.5 945.5,259.5 966.4,276.0 987.3,259.5 1217.2,259.5 1238.1,276.0 1259.0,259.5 1363.5,259.5 1384.4,276.0 1405.3,259.5 1488.0,259.5" fill="none" stroke="#87c8e8" stroke-width="3.2" stroke-linejoin="miter"/><line x1="1488" y1="259.5" x2="1854" y2="259.5" stroke="#f0f0f0" stroke-width="1"/><polyline points="37.0,291.0 1175.4,291.0 1196.3,225.0 1217.2,291.0 1468.0,291.0 1488.0,226.0" fill="none" stroke="#fff8dc" stroke-width="4" stroke-linejoin="miter"/><line x1="1854.5" y1="219" x2="1854.5" y2="298" stroke="#fff" stroke-width="1"/><line x1="1854" y1="227.5" x2="1859" y2="227.5" stroke="#fff" stroke-width="1"/><line x1="1854" y1="238.5" x2="1865" y2="238.5" stroke="#fff" stroke-width="1"/><line x1="1854" y1="248.5" x2="1859" y2="248.5" stroke="#fff" stroke-width="1"/><line x1="1854" y1="259.5" x2="1865" y2="259.5" stroke="#fff" stroke-width="1"/><line x1="1854" y1="270.5" x2="1859" y2="270.5" stroke="#fff" stroke-width="1"/><line x1="1854" y1="281.5" x2="1865" y2="281.5" stroke="#fff" stroke-width="1"/><line x1="1854" y1="292.5" x2="1859" y2="292.5" stroke="#fff" stroke-width="1"/><line x1="37" y1="371.75" x2="1854" y2="371.75" stroke="#111" stroke-width="1.5" stroke-dasharray="4 3.5" stroke-dashoffset="3.25"/><line x1="37" y1="415.5" x2="1854" y2="415.5" stroke="#111" stroke-width="1.5" stroke-dasharray="4 3.5" stroke-dashoffset="3.25"/><line x1="37" y1="459.25" x2="1854" y2="459.25" stroke="#111" stroke-width="1.5" stroke-dasharray="4 3.5" stroke-dashoffset="3.25"/><line x1="37" y1="503" x2="1854" y2="503" stroke="#111" stroke-width="1.5" stroke-dasharray="4 3.5" stroke-dashoffset="3.25"/><line x1="37" y1="546.75" x2="1854" y2="546.75" stroke="#111" stroke-width="1.5" stroke-dasharray="4 3.5" stroke-dashoffset="3.25"/><polyline points="37.0,513.0 104.5,500.8 132.0,500.0 169.5,490.0 212.0,485.5 262.0,478.0 302.0,467.0 324.5,465.5 354.5,468.0 382.0,467.5 422.0,460.0 447.0,472.0 479.5,493.8 517.0,512.0 567.0,530.0 592.0,536.2 612.0,535.5 652.0,518.8 677.0,512.5 712.0,513.8 737.0,523.8 767.0,528.8 792.0,528.8 839.5,518.0 862.0,508.0 892.0,501.2 917.0,499.2 962.0,500.0 987.0,503.0 997.0,506.2 1027.0,518.8 1049.5,523.0 1069.5,523.0 1092.0,515.0 1122.0,498.8 1152.0,475.0 1177.0,460.0 1195.8,453.8 1217.0,460.0 1237.0,477.5 1257.0,491.2 1279.5,499.2 1299.5,501.2 1342.0,495.0 1362.0,493.8 1404.5,501.8 1424.5,500.0 1447.0,492.0 1477.0,485.0 1488.0,481.0" fill="none" stroke="#ecebd8" stroke-width="1.3" /><polyline points="37.0,476.2 57.0,477.5 72.0,481.2 89.5,485.5 107.0,481.2 119.5,477.5 129.5,476.2 137.0,479.5 152.0,488.8 192.0,488.8 212.0,477.5 237.0,477.5 252.0,483.0 272.0,488.8 322.0,488.8 337.0,485.5 382.0,485.5 399.5,488.8 422.0,488.8 444.5,471.8 509.5,471.8 527.0,476.2 547.0,471.8 592.0,471.8 612.0,476.2 630.8,480.0 652.0,485.5 674.5,485.5 692.0,480.8 712.0,477.0 734.5,471.8 799.5,471.8 817.0,476.2 839.5,485.5 904.5,485.5 922.0,480.8 949.5,478.0 964.5,471.8 1072.0,471.8 1092.0,480.0 1110.8,488.8 1197.0,488.8 1217.0,480.5 1237.0,471.8 1279.5,471.8 1299.5,476.2 1319.5,476.2 1342.0,485.5 1362.0,477.0 1384.5,476.2 1404.5,471.8 1424.5,471.8 1447.0,485.5 1477.0,485.5 1488.0,484.0" fill="none" stroke="#f0f000" stroke-width="1.3" /><polyline points="37.0,479.5 319.0,479.5 338.0,490.0 360.8,479.5 590.8,479.5 612.0,438.0 630.8,479.5 779.0,479.5 799.0,458.8 819.5,479.5 1049.5,479.5 1070.2,459.2 1090.8,479.5 1195.8,479.5 1216.5,501.2 1238.2,479.5 1303.2,479.5 1319.5,470.5 1340.8,479.5 1405.8,479.5 1425.0,470.5 1444.5,479.5 1488.0,479.5" fill="none" stroke="#000" stroke-width="2.6" stroke-linejoin="round"/><polyline points="37.0,350.5 319.0,350.5 338.2,491.2 590.8,491.2 612.0,437.0 778.2,437.0 798.2,415.5 1049.5,415.5 1069.5,394.5 1195.8,394.5 1217.0,502.5 1300.8,502.5 1319.5,470.5 1404.5,470.5 1424.5,459.2 1488.0,459.2" fill="none" stroke="#8c0000" stroke-width="4" stroke-linejoin="round"/><line x1="1854.5" y1="331" x2="1854.5" y2="555" stroke="#fff" stroke-width="1"/><line x1="1854" y1="334.5" x2="1859" y2="334.5" stroke="#fff" stroke-width="1"/><line x1="1854" y1="342.5" x2="1859" y2="342.5" stroke="#fff" stroke-width="1"/><line x1="1854" y1="350.5" x2="1865" y2="350.5" stroke="#fff" stroke-width="1"/><line x1="1854" y1="361.5" x2="1859" y2="361.5" stroke="#fff" stroke-width="1"/><line x1="1854" y1="371.5" x2="1865" y2="371.5" stroke="#fff" stroke-width="1"/><line x1="1854" y1="382.5" x2="1859" y2="382.5" stroke="#fff" stroke-width="1"/><line x1="1854" y1="393.5" x2="1865" y2="393.5" stroke="#fff" stroke-width="1"/><line x1="1854" y1="404.5" x2="1859" y2="404.5" stroke="#fff" stroke-width="1"/><line x1="1854" y1="415.5" x2="1865" y2="415.5" stroke="#fff" stroke-width="1"/><line x1="1854" y1="426.5" x2="1859" y2="426.5" stroke="#fff" stroke-width="1"/><line x1="1854" y1="437.5" x2="1865" y2="437.5" stroke="#fff" stroke-width="1"/><line x1="1854" y1="448.5" x2="1859" y2="448.5" stroke="#fff" stroke-width="1"/><line x1="1854" y1="459.5" x2="1865" y2="459.5" stroke="#fff" stroke-width="1"/><line x1="1854" y1="470.5" x2="1859" y2="470.5" stroke="#fff" stroke-width="1"/><line x1="1854" y1="481.5" x2="1865" y2="481.5" stroke="#fff" stroke-width="1"/><line x1="1854" y1="492.5" x2="1859" y2="492.5" stroke="#fff" stroke-width="1"/><line x1="1854" y1="502.5" x2="1865" y2="502.5" stroke="#fff" stroke-width="1"/><line x1="1854" y1="514.5" x2="1859" y2="514.5" stroke="#fff" stroke-width="1"/><line x1="1854" y1="524.5" x2="1865" y2="524.5" stroke="#fff" stroke-width="1"/><line x1="1854" y1="535.5" x2="1859" y2="535.5" stroke="#fff" stroke-width="1"/><line x1="1854" y1="546.5" x2="1865" y2="546.5" stroke="#fff" stroke-width="1"/><line x1="46.9" y1="669.0" x2="46.9" y2="678.0" stroke="#8ea6c6" stroke-width="1.3"/><rect x="38.4" y="669.0" width="17" height="2.0" fill="#000" stroke="#8ea6c6" stroke-width="1.25"/><line x1="67.8" y1="666.0" x2="67.8" y2="675.6" stroke="#ff6820" stroke-width="1.3"/><rect x="58.8" y="668.0" width="18" height="5.5" fill="#ff6820"/><line x1="88.7" y1="668.0" x2="88.7" y2="674.6" stroke="#8ea6c6" stroke-width="1.3"/><rect x="80.2" y="671.0" width="17" height="3.6" fill="#000" stroke="#8ea6c6" stroke-width="1.25"/><line x1="109.6" y1="666.0" x2="109.6" y2="675.6" stroke="#ff6820" stroke-width="1.3"/><rect x="100.6" y="671.0" width="18" height="4.6" fill="#ff6820"/><line x1="130.5" y1="672.5" x2="130.5" y2="681.0" stroke="#8ea6c6" stroke-width="1.3"/><rect x="122.0" y="675.0" width="17" height="2.0" fill="#000" stroke="#8ea6c6" stroke-width="1.25"/><line x1="151.4" y1="665.0" x2="151.4" y2="677.0" stroke="#8ea6c6" stroke-width="1.3"/><rect x="142.9" y="668.8" width="17" height="6.9" fill="#000" stroke="#8ea6c6" stroke-width="1.25"/><line x1="172.3" y1="655.0" x2="172.3" y2="669.4" stroke="#8ea6c6" stroke-width="1.3"/><rect x="163.8" y="657.5" width="17" height="11.9" fill="#000" stroke="#8ea6c6" stroke-width="1.25"/><line x1="193.2" y1="654.8" x2="193.2" y2="670.6" stroke="#ff6820" stroke-width="1.3"/><rect x="184.2" y="657.0" width="18" height="12.4" fill="#ff6820"/><line x1="214.1" y1="666.0" x2="214.1" y2="674.0" stroke="#ff6820" stroke-width="1.3"/><rect x="205.1" y="668.5" width="18" height="1.5" fill="#ff6820"/><line x1="235.0" y1="667.5" x2="235.0" y2="670.6" stroke="#8ea6c6" stroke-width="1.3"/><rect x="226.5" y="667.5" width="17" height="3.1" fill="#000" stroke="#8ea6c6" stroke-width="1.25"/><line x1="255.9" y1="658.0" x2="255.9" y2="668.0" stroke="#8ea6c6" stroke-width="1.3"/><rect x="247.4" y="666.0" width="17" height="2.0" fill="#000" stroke="#8ea6c6" stroke-width="1.25"/><line x1="276.8" y1="645.2" x2="276.8" y2="661.0" stroke="#8ea6c6" stroke-width="1.3"/><rect x="268.3" y="645.2" width="17" height="13.2" fill="#000" stroke="#8ea6c6" stroke-width="1.25"/><line x1="297.7" y1="635.0" x2="297.7" y2="645.6" stroke="#8ea6c6" stroke-width="1.3"/><rect x="289.2" y="640.2" width="17" height="5.4" fill="#000" stroke="#8ea6c6" stroke-width="1.25"/><line x1="318.6" y1="639.8" x2="318.6" y2="653.0" stroke="#ff6820" stroke-width="1.3"/><rect x="309.6" y="639.8" width="18" height="7.5" fill="#ff6820"/><line x1="339.5" y1="646.0" x2="339.5" y2="657.2" stroke="#ff6820" stroke-width="1.3"/><rect x="330.5" y="647.2" width="18" height="3.4" fill="#ff6820"/><line x1="360.4" y1="640.6" x2="360.4" y2="652.2" stroke="#8ea6c6" stroke-width="1.3"/><rect x="351.9" y="642.2" width="17" height="10.0" fill="#000" stroke="#8ea6c6" stroke-width="1.25"/><line x1="381.3" y1="639.4" x2="381.3" y2="645.6" stroke="#ff6820" stroke-width="1.3"/><rect x="372.3" y="642.2" width="18" height="1.5" fill="#ff6820"/><line x1="402.2" y1="622.2" x2="402.2" y2="644.4" stroke="#8ea6c6" stroke-width="1.3"/><rect x="393.7" y="622.2" width="17" height="22.1" fill="#000" stroke="#8ea6c6" stroke-width="1.25"/><line x1="423.1" y1="620.6" x2="423.1" y2="632.5" stroke="#ff6820" stroke-width="1.3"/><rect x="414.1" y="623.0" width="18" height="1.8" fill="#ff6820"/><line x1="444.0" y1="619.8" x2="444.0" y2="671.0" stroke="#ff6820" stroke-width="1.3"/><rect x="435.0" y="624.8" width="18" height="46.2" fill="#ff6820"/><line x1="464.9" y1="671.0" x2="464.9" y2="691.0" stroke="#ff6820" stroke-width="1.3"/><rect x="455.9" y="671.0" width="18" height="13.8" fill="#ff6820"/><line x1="485.8" y1="683.5" x2="485.8" y2="696.0" stroke="#ff6820" stroke-width="1.3"/><rect x="476.8" y="683.5" width="18" height="6.2" fill="#ff6820"/><line x1="506.7" y1="687.2" x2="506.7" y2="699.8" stroke="#ff6820" stroke-width="1.3"/><rect x="497.7" y="689.8" width="18" height="8.8" fill="#ff6820"/><line x1="527.6" y1="697.2" x2="527.6" y2="710.6" stroke="#ff6820" stroke-width="1.3"/><rect x="518.6" y="698.5" width="18" height="12.1" fill="#ff6820"/><line x1="548.5" y1="708.5" x2="548.5" y2="727.2" stroke="#ff6820" stroke-width="1.3"/><rect x="539.5" y="711.0" width="18" height="16.2" fill="#ff6820"/><line x1="569.4" y1="736.0" x2="569.4" y2="755.0" stroke="#ff6820" stroke-width="1.3"/><rect x="560.4" y="743.8" width="18" height="1.5" fill="#ff6820"/><line x1="590.2" y1="733.5" x2="590.2" y2="757.5" stroke="#ff6820" stroke-width="1.3"/><rect x="581.2" y="744.8" width="18" height="11.2" fill="#ff6820"/><line x1="611.1" y1="741.2" x2="611.1" y2="756.9" stroke="#8ea6c6" stroke-width="1.3"/><rect x="602.6" y="741.2" width="17" height="15.6" fill="#000" stroke="#8ea6c6" stroke-width="1.25"/><line x1="632.0" y1="727.2" x2="632.0" y2="743.5" stroke="#8ea6c6" stroke-width="1.3"/><rect x="623.5" y="732.5" width="17" height="9.4" fill="#000" stroke="#8ea6c6" stroke-width="1.25"/><line x1="652.9" y1="723.5" x2="652.9" y2="737.2" stroke="#8ea6c6" stroke-width="1.3"/><rect x="644.4" y="728.8" width="17" height="4.8" fill="#000" stroke="#8ea6c6" stroke-width="1.25"/><line x1="673.8" y1="728.5" x2="673.8" y2="738.8" stroke="#ff6820" stroke-width="1.3"/><rect x="664.8" y="728.5" width="18" height="3.8" fill="#ff6820"/><line x1="694.7" y1="726.0" x2="694.7" y2="748.5" stroke="#ff6820" stroke-width="1.3"/><rect x="685.7" y="732.2" width="18" height="15.0" fill="#ff6820"/><line x1="715.6" y1="737.0" x2="715.6" y2="753.5" stroke="#ff6820" stroke-width="1.3"/><rect x="706.6" y="739.8" width="18" height="13.8" fill="#ff6820"/><line x1="736.5" y1="750.0" x2="736.5" y2="793.5" stroke="#ff6820" stroke-width="1.3"/><rect x="727.5" y="753.5" width="18" height="26.2" fill="#ff6820"/><line x1="757.4" y1="769.4" x2="757.4" y2="781.9" stroke="#8ea6c6" stroke-width="1.3"/><rect x="748.9" y="776.2" width="17" height="4.4" fill="#000" stroke="#8ea6c6" stroke-width="1.25"/><line x1="778.3" y1="768.5" x2="778.3" y2="786.0" stroke="#ff6820" stroke-width="1.3"/><rect x="769.3" y="776.2" width="18" height="4.4" fill="#ff6820"/><line x1="799.2" y1="779.8" x2="799.2" y2="796.2" stroke="#ff6820" stroke-width="1.3"/><rect x="790.2" y="781.0" width="18" height="4.6" fill="#ff6820"/><line x1="820.1" y1="781.5" x2="820.1" y2="789.8" stroke="#ff6820" stroke-width="1.3"/><rect x="811.1" y="786.2" width="18" height="1.5" fill="#ff6820"/><line x1="841.0" y1="773.1" x2="841.0" y2="788.1" stroke="#8ea6c6" stroke-width="1.3"/><rect x="832.5" y="781.5" width="17" height="6.6" fill="#000" stroke="#8ea6c6" stroke-width="1.25"/><line x1="861.9" y1="758.5" x2="861.9" y2="780.6" stroke="#8ea6c6" stroke-width="1.3"/><rect x="853.4" y="769.0" width="17" height="1.6" fill="#000" stroke="#8ea6c6" stroke-width="1.25"/><line x1="882.8" y1="770.0" x2="882.8" y2="784.8" stroke="#ff6820" stroke-width="1.3"/><rect x="873.8" y="770.0" width="18" height="9.8" fill="#ff6820"/><line x1="903.7" y1="773.8" x2="903.7" y2="791.0" stroke="#8ea6c6" stroke-width="1.3"/><rect x="895.2" y="775.2" width="17" height="5.4" fill="#000" stroke="#8ea6c6" stroke-width="1.25"/><line x1="924.6" y1="773.5" x2="924.6" y2="787.2" stroke="#ff6820" stroke-width="1.3"/><rect x="915.6" y="774.8" width="18" height="10.0" fill="#ff6820"/><line x1="945.5" y1="779.8" x2="945.5" y2="796.0" stroke="#ff6820" stroke-width="1.3"/><rect x="936.5" y="784.8" width="18" height="6.2" fill="#ff6820"/><line x1="966.4" y1="788.5" x2="966.4" y2="802.2" stroke="#ff6820" stroke-width="1.3"/><rect x="957.4" y="791.0" width="18" height="6.2" fill="#ff6820"/><line x1="987.3" y1="783.5" x2="987.3" y2="803.5" stroke="#ff6820" stroke-width="1.3"/><rect x="978.3" y="797.2" width="18" height="6.2" fill="#ff6820"/><line x1="1008.2" y1="817.5" x2="1008.2" y2="827.2" stroke="#ff6820" stroke-width="1.3"/><rect x="999.2" y="817.5" width="18" height="3.5" fill="#ff6820"/><line x1="1029.1" y1="819.8" x2="1029.1" y2="839.8" stroke="#ff6820" stroke-width="1.3"/><rect x="1020.1" y="821.0" width="18" height="18.8" fill="#ff6820"/><line x1="1050.0" y1="823.5" x2="1050.0" y2="840.6" stroke="#8ea6c6" stroke-width="1.3"/><rect x="1041.5" y="834.0" width="17" height="6.6" fill="#000" stroke="#8ea6c6" stroke-width="1.25"/><line x1="1070.9" y1="826.0" x2="1070.9" y2="839.8" stroke="#ff6820" stroke-width="1.3"/><rect x="1061.9" y="833.5" width="18" height="3.4" fill="#ff6820"/><line x1="1091.8" y1="819.8" x2="1091.8" y2="838.5" stroke="#8ea6c6" stroke-width="1.3"/><rect x="1083.3" y="826.0" width="17" height="12.5" fill="#000" stroke="#8ea6c6" stroke-width="1.25"/><line x1="1112.7" y1="805.0" x2="1112.7" y2="828.5" stroke="#8ea6c6" stroke-width="1.3"/><rect x="1104.2" y="811.2" width="17" height="15.6" fill="#000" stroke="#8ea6c6" stroke-width="1.25"/><line x1="1133.6" y1="792.5" x2="1133.6" y2="814.8" stroke="#8ea6c6" stroke-width="1.3"/><rect x="1125.1" y="795.0" width="17" height="16.9" fill="#000" stroke="#8ea6c6" stroke-width="1.25"/><line x1="1154.5" y1="766.0" x2="1154.5" y2="784.8" stroke="#8ea6c6" stroke-width="1.3"/><rect x="1145.5" y="775.0" width="18" height="6.9" fill="#8ea6c6"/><line x1="1175.4" y1="756.0" x2="1175.4" y2="789.8" stroke="#8ea6c6" stroke-width="1.3"/><rect x="1166.9" y="766.5" width="17" height="17.0" fill="#000" stroke="#8ea6c6" stroke-width="1.25"/><line x1="1196.3" y1="758.0" x2="1196.3" y2="766.5" stroke="#8ea6c6" stroke-width="1.3"/><rect x="1187.8" y="760.0" width="17" height="6.5" fill="#000" stroke="#8ea6c6" stroke-width="1.25"/><line x1="1217.2" y1="760.0" x2="1217.2" y2="793.3" stroke="#ff6820" stroke-width="1.3"/><rect x="1208.2" y="760.0" width="18" height="33.3" fill="#ff6820"/><line x1="1238.1" y1="793.7" x2="1238.1" y2="824.7" stroke="#ff6820" stroke-width="1.3"/><rect x="1229.1" y="793.7" width="18" height="31.0" fill="#ff6820"/><line x1="1259.0" y1="813.3" x2="1259.0" y2="825.8" stroke="#8ea6c6" stroke-width="1.3"/><rect x="1250.5" y="822.5" width="17" height="3.3" fill="#000" stroke="#8ea6c6" stroke-width="1.25"/><line x1="1279.9" y1="814.0" x2="1279.9" y2="840.0" stroke="#ff6820" stroke-width="1.3"/><rect x="1270.9" y="822.5" width="18" height="3.3" fill="#ff6820"/><line x1="1300.8" y1="812.0" x2="1300.8" y2="838.3" stroke="#ff6820" stroke-width="1.3"/><rect x="1291.8" y="820.8" width="18" height="8.9" fill="#ff6820"/><line x1="1321.7" y1="814.7" x2="1321.7" y2="853.3" stroke="#8ea6c6" stroke-width="1.3"/><rect x="1313.2" y="818.7" width="17" height="12.1" fill="#000" stroke="#8ea6c6" stroke-width="1.25"/><line x1="1342.6" y1="812.0" x2="1342.6" y2="828.3" stroke="#8ea6c6" stroke-width="1.3"/><rect x="1334.1" y="817.5" width="17" height="2.2" fill="#000" stroke="#8ea6c6" stroke-width="1.25"/><line x1="1363.5" y1="814.7" x2="1363.5" y2="838.3" stroke="#ff6820" stroke-width="1.3"/><rect x="1354.5" y="817.0" width="18" height="13.8" fill="#ff6820"/><line x1="1384.4" y1="831.0" x2="1384.4" y2="848.0" stroke="#ff6820" stroke-width="1.3"/><rect x="1375.4" y="831.0" width="18" height="8.5" fill="#ff6820"/><line x1="1405.3" y1="830.2" x2="1405.3" y2="842.2" stroke="#ff6820" stroke-width="1.3"/><rect x="1396.3" y="838.5" width="18" height="2.4" fill="#ff6820"/><line x1="1426.2" y1="830.9" x2="1426.2" y2="844.4" stroke="#8ea6c6" stroke-width="1.3"/><rect x="1417.7" y="837.6" width="17" height="3.3" fill="#000" stroke="#8ea6c6" stroke-width="1.25"/><line x1="1447.1" y1="822.0" x2="1447.1" y2="838.3" stroke="#8ea6c6" stroke-width="1.3"/><rect x="1438.6" y="828.7" width="17" height="9.6" fill="#000" stroke="#8ea6c6" stroke-width="1.25"/><line x1="1468.0" y1="817.2" x2="1468.0" y2="836.1" stroke="#8ea6c6" stroke-width="1.3"/><rect x="1459.5" y="821.3" width="17" height="9.6" fill="#000" stroke="#8ea6c6" stroke-width="1.25"/><line x1="1488.9" y1="815.3" x2="1488.9" y2="823.1" stroke="#8ea6c6" stroke-width="1.3"/><rect x="1480.4" y="815.3" width="17" height="7.8" fill="#000" stroke="#8ea6c6" stroke-width="1.25"/><line x1="1216.5" y1="134" x2="1216.5" y2="186" stroke="#ff1010" stroke-width="1"/><line x1="1488.5" y1="163" x2="1488.5" y2="186" stroke="#22dd22" stroke-width="1"/><line x1="1216.5" y1="219" x2="1216.5" y2="298" stroke="#ff1010" stroke-width="1"/><line x1="1488.5" y1="219" x2="1488.5" y2="298" stroke="#22dd22" stroke-width="1"/><line x1="1216.5" y1="331" x2="1216.5" y2="555" stroke="#ff1010" stroke-width="1"/><line x1="1488.5" y1="331" x2="1488.5" y2="555" stroke="#22dd22" stroke-width="1"/><line x1="1216.5" y1="588" x2="1216.5" y2="893" stroke="#ff1010" stroke-width="1"/><line x1="1488.5" y1="588" x2="1488.5" y2="893" stroke="#22dd22" stroke-width="1"/><polyline points="37.0,675.5 46.9,674.0 67.8,678.8 88.7,675.0 109.6,680.0 130.5,679.0 151.4,671.0 172.3,657.5 193.2,676.5 214.1,676.5 235.0,672.5 255.9,668.8 276.8,641.5 297.7,640.2 318.6,653.8 339.5,660.6 360.4,645.2 381.3,646.5 402.2,621.5 423.1,626.5 444.0,694.8 464.9,706.5 485.8,702.5 506.7,709.7 527.6,720.6 548.5,738.0 569.4,758.8 590.2,768.0 611.1,747.0 632.0,733.8 652.9,733.0 673.8,738.8 694.7,758.0 715.6,763.8 736.5,796.0 757.4,786.5 778.3,791.2 799.2,796.9 820.1,793.1 841.0,783.1 861.9,771.9 882.8,789.4 903.7,781.9 924.6,795.0 945.5,800.0 966.4,807.8 987.3,811.9 1008.2,832.5 1029.1,854.0 1050.0,840.2 1070.9,843.1 1091.8,826.9 1112.7,809.4 1133.6,793.8 1154.5,782.5 1175.4,768.5 1196.3,764.1 1217.2,813.3 1238.1,849.2 1259.0,835.3 1279.9,836.3 1300.8,839.2 1321.7,828.0 1342.6,825.3 1363.5,845.3 1384.4,855.5 1405.3,848.0 1426.2,842.6 1447.1,833.1 1468.0,825.0 1488.9,819.4" fill="none" stroke="#22b022" stroke-width="1.15" /><polyline points="37.0,665.0 46.9,664.0 67.8,668.0 88.7,667.5 109.6,672.0 130.5,672.5 151.4,664.4 172.3,649.0 193.2,666.0 214.1,666.0 235.0,663.0 255.9,661.0 276.8,635.6 297.7,631.5 318.6,643.0 339.5,648.8 360.4,635.2 381.3,639.0 402.2,612.5 423.1,619.4 444.0,676.5 464.9,684.8 485.8,685.0 506.7,690.8 527.6,710.0 548.5,728.0 569.4,747.5 590.2,753.0 611.1,731.2 632.0,720.2 652.9,720.2 673.8,729.4 694.7,746.9 715.6,751.9 736.5,778.5 757.4,769.0 778.3,774.0 799.2,780.2 820.1,782.8 841.0,772.8 861.9,760.6 882.8,776.9 903.7,769.0 924.6,782.5 945.5,788.8 966.4,796.5 987.3,798.8 1008.2,822.5 1029.1,840.0 1050.0,826.2 1070.9,831.2 1091.8,816.2 1112.7,797.5 1133.6,778.8 1154.5,768.5 1175.4,751.2 1196.3,748.8 1217.2,794.2 1238.1,827.5 1259.0,817.5 1279.9,814.7 1300.8,820.8 1321.7,807.5 1342.6,805.0 1363.5,824.7 1384.4,837.5 1405.3,835.5 1426.2,830.7 1447.1,820.6 1468.0,812.8 1488.9,807.6" fill="none" stroke="#ee1010" stroke-width="1.15" /><path d="M1212 697H1221V714H1228L1216.5 726L1205 714H1212Z" fill="#ff0000"/><path d="M1483 885H1491V868H1498L1487 856L1475 868H1483Z" fill="#00a000"/><path d="M432.0 893.5L438.5 900 M442.0 893.5L448.5 900 M452.0 893.5L458.5 900 M462.0 893.5L468.5 900 M472.0 893.5L478.5 900 M482.0 893.5L488.5 900 M492.0 893.5L498.5 900 M502.0 893.5L508.5 900 M512.0 893.5L518.5 900 M522.0 893.5L528.5 900 M532.0 893.5L538.5 900 M542.0 893.5L548.5 900 M552.0 893.5L558.5 900 M562.0 893.5L568.5 900 M572.0 893.5L578.5 900 M582.0 893.5L588.5 900 M592.0 893.5L598.5 900 M602.0 893.5L608.5 900 M612.0 893.5L618.5 900 M622.0 893.5L628.5 900 M632.0 893.5L638.5 900 M642.0 893.5L648.5 900 M652.0 893.5L658.5 900 M662.0 893.5L668.5 900 M672.0 893.5L678.5 900 M682.0 893.5L688.5 900 M692.0 893.5L698.5 900 M702.0 893.5L708.5 900 M712.0 893.5L718.5 900 M722.0 893.5L728.5 900 M732.0 893.5L738.5 900 M742.0 893.5L748.5 900 M752.0 893.5L758.5 900 M762.0 893.5L768.5 900 M772.0 893.5L778.5 900 M782.0 893.5L788.5 900 M792.0 893.5L798.5 900 M802.0 893.5L808.5 900 M812.0 893.5L818.5 900 M822.0 893.5L828.5 900 M832.0 893.5L838.5 900 M842.0 893.5L848.5 900 M852.0 893.5L858.5 900 M862.0 893.5L868.5 900 M872.0 893.5L878.5 900 M882.0 893.5L888.5 900 M892.0 893.5L898.5 900 M902.0 893.5L908.5 900 M912.0 893.5L918.5 900 M922.0 893.5L928.5 900 M932.0 893.5L938.5 900 M942.0 893.5L948.5 900 M952.0 893.5L958.5 900 M962.0 893.5L968.5 900 M972.0 893.5L978.5 900 M982.0 893.5L988.5 900 M992.0 893.5L998.5 900 M1002.0 893.5L1008.5 900 M1012.0 893.5L1018.5 900 M1022.0 893.5L1028.5 900 M1032.0 893.5L1038.5 900 M1042.0 893.5L1048.5 900 M1052.0 893.5L1058.5 900 M1062.0 893.5L1068.5 900 M1072.0 893.5L1078.5 900 M1082.0 893.5L1088.5 900 M1092.0 893.5L1098.5 900 M1102.0 893.5L1108.5 900 M1112.0 893.5L1118.5 900 M1122.0 893.5L1128.5 900 M1132.0 893.5L1138.5 900 M1142.0 893.5L1148.5 900 M1152.0 893.5L1158.5 900 M1162.0 893.5L1168.5 900 M1172.0 893.5L1178.5 900 M1182.0 893.5L1188.5 900 M1192.0 893.5L1198.5 900 M1202.0 893.5L1208.5 900 M1212.0 893.5L1218.5 900 M1222.0 893.5L1228.5 900 M1232.0 893.5L1238.5 900 M1242.0 893.5L1248.5 900 M1252.0 893.5L1258.5 900 M1262.0 893.5L1268.5 900 M1272.0 893.5L1278.5 900 M1282.0 893.5L1288.5 900 M1292.0 893.5L1298.5 900 M1302.0 893.5L1308.5 900 M1312.0 893.5L1318.5 900 M1322.0 893.5L1328.5 900 M1332.0 893.5L1338.5 900 M1342.0 893.5L1348.5 900 M1352.0 893.5L1358.5 900 M1362.0 893.5L1368.5 900 M1372.0 893.5L1378.5 900 M1382.0 893.5L1388.5 900 M1392.0 893.5L1398.5 900 M1402.0 893.5L1408.5 900 M1412.0 893.5L1418.5 900 M1422.0 893.5L1428.5 900 M1432.0 893.5L1438.5 900 M1442.0 893.5L1448.5 900 M1452.0 893.5L1458.5 900 M1462.0 893.5L1468.5 900 M1472.0 893.5L1478.5 900" stroke="#c00000" stroke-width="1.3"/><path d="M1483 900L1491 893M1493 900L1501 893M1503 900L1511 893" stroke="#008800" stroke-width="1.3"/><line x1="1489" y1="894" x2="1499" y2="894" stroke="#0000ff" stroke-width="1.3"/><line x1="231" y1="894" x2="238" y2="894" stroke="#0000c0" stroke-width="1.3"/><line x1="37" y1="900.5" x2="432" y2="900.5" stroke="#ffff00" stroke-width="1.3"/><line x1="1854.5" y1="588" x2="1854.5" y2="893" stroke="#fff" stroke-width="1"/><line x1="1854" y1="600.5" x2="1859" y2="600.5" stroke="#fff" stroke-width="1"/><line x1="1854" y1="608.5" x2="1859" y2="608.5" stroke="#fff" stroke-width="1"/><line x1="1854" y1="615.5" x2="1859" y2="615.5" stroke="#fff" stroke-width="1"/><line x1="1854" y1="623.5" x2="1865" y2="623.5" stroke="#fff" stroke-width="1"/><line x1="1854" y1="630.5" x2="1859" y2="630.5" stroke="#fff" stroke-width="1"/><line x1="1854" y1="637.5" x2="1859" y2="637.5" stroke="#fff" stroke-width="1"/><line x1="1854" y1="645.5" x2="1859" y2="645.5" stroke="#fff" stroke-width="1"/><line x1="1854" y1="652.5" x2="1859" y2="652.5" stroke="#fff" stroke-width="1"/><line x1="1854" y1="660.5" x2="1865" y2="660.5" stroke="#fff" stroke-width="1"/><line x1="1854" y1="667.5" x2="1859" y2="667.5" stroke="#fff" stroke-width="1"/><line x1="1854" y1="674.5" x2="1859" y2="674.5" stroke="#fff" stroke-width="1"/><line x1="1854" y1="682.5" x2="1859" y2="682.5" stroke="#fff" stroke-width="1"/><line x1="1854" y1="689.5" x2="1859" y2="689.5" stroke="#fff" stroke-width="1"/><line x1="1854" y1="697.5" x2="1865" y2="697.5" stroke="#fff" stroke-width="1"/><line x1="1854" y1="704.5" x2="1859" y2="704.5" stroke="#fff" stroke-width="1"/><line x1="1854" y1="711.5" x2="1859" y2="711.5" stroke="#fff" stroke-width="1"/><line x1="1854" y1="719.5" x2="1859" y2="719.5" stroke="#fff" stroke-width="1"/><line x1="1854" y1="726.5" x2="1859" y2="726.5" stroke="#fff" stroke-width="1"/><line x1="1854" y1="734.5" x2="1865" y2="734.5" stroke="#fff" stroke-width="1"/><line x1="1854" y1="741.5" x2="1859" y2="741.5" stroke="#fff" stroke-width="1"/><line x1="1854" y1="749.5" x2="1859" y2="749.5" stroke="#fff" stroke-width="1"/><line x1="1854" y1="756.5" x2="1859" y2="756.5" stroke="#fff" stroke-width="1"/><line x1="1854" y1="763.5" x2="1859" y2="763.5" stroke="#fff" stroke-width="1"/><line x1="1854" y1="771.5" x2="1865" y2="771.5" stroke="#fff" stroke-width="1"/><line x1="1854" y1="778.5" x2="1859" y2="778.5" stroke="#fff" stroke-width="1"/><line x1="1854" y1="786.5" x2="1859" y2="786.5" stroke="#fff" stroke-width="1"/><line x1="1854" y1="793.5" x2="1859" y2="793.5" stroke="#fff" stroke-width="1"/><line x1="1854" y1="800.5" x2="1859" y2="800.5" stroke="#fff" stroke-width="1"/><line x1="1854" y1="808.5" x2="1865" y2="808.5" stroke="#fff" stroke-width="1"/><line x1="1854" y1="815.5" x2="1859" y2="815.5" stroke="#fff" stroke-width="1"/><line x1="1854" y1="823.5" x2="1859" y2="823.5" stroke="#fff" stroke-width="1"/><line x1="1854" y1="830.5" x2="1859" y2="830.5" stroke="#fff" stroke-width="1"/><line x1="1854" y1="838.5" x2="1859" y2="838.5" stroke="#fff" stroke-width="1"/><line x1="1854" y1="845.5" x2="1865" y2="845.5" stroke="#fff" stroke-width="1"/><line x1="1854" y1="852.5" x2="1859" y2="852.5" stroke="#fff" stroke-width="1"/><line x1="1854" y1="860.5" x2="1859" y2="860.5" stroke="#fff" stroke-width="1"/><line x1="1854" y1="867.5" x2="1859" y2="867.5" stroke="#fff" stroke-width="1"/><line x1="1854" y1="875.5" x2="1859" y2="875.5" stroke="#fff" stroke-width="1"/><line x1="1854" y1="882.5" x2="1865" y2="882.5" stroke="#fff" stroke-width="1"/><line x1="1854" y1="889.5" x2="1859" y2="889.5" stroke="#fff" stroke-width="1"/><line x1="37" y1="901.5" x2="1854" y2="901.5" stroke="#f0f0f0" stroke-width="1.3"/><line x1="37" y1="922" x2="1854" y2="922" stroke="#f0f0f0" stroke-width="1.3"/><line x1="46.9" y1="901" x2="46.9" y2="908.5" stroke="#f0f0f0" stroke-width="1.3"/><line x1="67.8" y1="901" x2="67.8" y2="908.5" stroke="#f0f0f0" stroke-width="1.3"/><line x1="88.7" y1="901" x2="88.7" y2="908.5" stroke="#f0f0f0" stroke-width="1.3"/><line x1="109.6" y1="901" x2="109.6" y2="908.5" stroke="#f0f0f0" stroke-width="1.3"/><line x1="130.5" y1="901" x2="130.5" y2="923" stroke="#f0f0f0" stroke-width="1.3"/><line x1="151.4" y1="901" x2="151.4" y2="908.5" stroke="#f0f0f0" stroke-width="1.3"/><line x1="172.3" y1="901" x2="172.3" y2="908.5" stroke="#f0f0f0" stroke-width="1.3"/><line x1="193.2" y1="901" x2="193.2" y2="908.5" stroke="#f0f0f0" stroke-width="1.3"/><line x1="214.1" y1="901" x2="214.1" y2="908.5" stroke="#f0f0f0" stroke-width="1.3"/><line x1="235.0" y1="901" x2="235.0" y2="908.5" stroke="#f0f0f0" stroke-width="1.3"/><line x1="255.9" y1="901" x2="255.9" y2="908.5" stroke="#f0f0f0" stroke-width="1.3"/><line x1="276.8" y1="901" x2="276.8" y2="923" stroke="#f0f0f0" stroke-width="1.3"/><line x1="297.7" y1="901" x2="297.7" y2="908.5" stroke="#f0f0f0" stroke-width="1.3"/><line x1="318.6" y1="901" x2="318.6" y2="908.5" stroke="#f0f0f0" stroke-width="1.3"/><line x1="339.5" y1="901" x2="339.5" y2="908.5" stroke="#f0f0f0" stroke-width="1.3"/><line x1="360.4" y1="901" x2="360.4" y2="908.5" stroke="#f0f0f0" stroke-width="1.3"/><line x1="381.3" y1="901" x2="381.3" y2="908.5" stroke="#f0f0f0" stroke-width="1.3"/><line x1="402.2" y1="901" x2="402.2" y2="908.5" stroke="#f0f0f0" stroke-width="1.3"/><line x1="423.1" y1="901" x2="423.1" y2="923" stroke="#f0f0f0" stroke-width="1.3"/><line x1="444.0" y1="901" x2="444.0" y2="908.5" stroke="#f0f0f0" stroke-width="1.3"/><line x1="464.9" y1="901" x2="464.9" y2="908.5" stroke="#f0f0f0" stroke-width="1.3"/><line x1="485.8" y1="901" x2="485.8" y2="908.5" stroke="#f0f0f0" stroke-width="1.3"/><line x1="506.7" y1="901" x2="506.7" y2="908.5" stroke="#f0f0f0" stroke-width="1.3"/><line x1="527.6" y1="901" x2="527.6" y2="908.5" stroke="#f0f0f0" stroke-width="1.3"/><line x1="548.5" y1="901" x2="548.5" y2="908.5" stroke="#f0f0f0" stroke-width="1.3"/><line x1="569.4" y1="901" x2="569.4" y2="923" stroke="#f0f0f0" stroke-width="1.3"/><line x1="590.2" y1="901" x2="590.2" y2="908.5" stroke="#f0f0f0" stroke-width="1.3"/><line x1="611.1" y1="901" x2="611.1" y2="908.5" stroke="#f0f0f0" stroke-width="1.3"/><line x1="632.0" y1="901" x2="632.0" y2="908.5" stroke="#f0f0f0" stroke-width="1.3"/><line x1="652.9" y1="901" x2="652.9" y2="908.5" stroke="#f0f0f0" stroke-width="1.3"/><line x1="673.8" y1="901" x2="673.8" y2="908.5" stroke="#f0f0f0" stroke-width="1.3"/><line x1="694.7" y1="901" x2="694.7" y2="908.5" stroke="#f0f0f0" stroke-width="1.3"/><line x1="715.6" y1="901" x2="715.6" y2="923" stroke="#f0f0f0" stroke-width="1.3"/><line x1="736.5" y1="901" x2="736.5" y2="908.5" stroke="#f0f0f0" stroke-width="1.3"/><line x1="757.4" y1="901" x2="757.4" y2="908.5" stroke="#f0f0f0" stroke-width="1.3"/><line x1="778.3" y1="901" x2="778.3" y2="908.5" stroke="#f0f0f0" stroke-width="1.3"/><line x1="799.2" y1="901" x2="799.2" y2="908.5" stroke="#f0f0f0" stroke-width="1.3"/><line x1="820.1" y1="901" x2="820.1" y2="908.5" stroke="#f0f0f0" stroke-width="1.3"/><line x1="841.0" y1="901" x2="841.0" y2="908.5" stroke="#f0f0f0" stroke-width="1.3"/><line x1="861.9" y1="901" x2="861.9" y2="923" stroke="#f0f0f0" stroke-width="1.3"/><line x1="882.8" y1="901" x2="882.8" y2="908.5" stroke="#f0f0f0" stroke-width="1.3"/><line x1="903.7" y1="901" x2="903.7" y2="908.5" stroke="#f0f0f0" stroke-width="1.3"/><line x1="924.6" y1="901" x2="924.6" y2="908.5" stroke="#f0f0f0" stroke-width="1.3"/><line x1="945.5" y1="901" x2="945.5" y2="908.5" stroke="#f0f0f0" stroke-width="1.3"/><line x1="966.4" y1="901" x2="966.4" y2="908.5" stroke="#f0f0f0" stroke-width="1.3"/><line x1="987.3" y1="901" x2="987.3" y2="908.5" stroke="#f0f0f0" stroke-width="1.3"/><line x1="1008.2" y1="901" x2="1008.2" y2="941" stroke="#f0f0f0" stroke-width="1.3"/><line x1="1029.1" y1="901" x2="1029.1" y2="908.5" stroke="#f0f0f0" stroke-width="1.3"/><line x1="1050.0" y1="901" x2="1050.0" y2="908.5" stroke="#f0f0f0" stroke-width="1.3"/><line x1="1070.9" y1="901" x2="1070.9" y2="908.5" stroke="#f0f0f0" stroke-width="1.3"/><line x1="1091.8" y1="901" x2="1091.8" y2="908.5" stroke="#f0f0f0" stroke-width="1.3"/><line x1="1112.7" y1="901" x2="1112.7" y2="908.5" stroke="#f0f0f0" stroke-width="1.3"/><line x1="1133.6" y1="901" x2="1133.6" y2="908.5" stroke="#f0f0f0" stroke-width="1.3"/><line x1="1154.5" y1="901" x2="1154.5" y2="923" stroke="#f0f0f0" stroke-width="1.3"/><line x1="1175.4" y1="901" x2="1175.4" y2="908.5" stroke="#f0f0f0" stroke-width="1.3"/><line x1="1196.3" y1="901" x2="1196.3" y2="908.5" stroke="#f0f0f0" stroke-width="1.3"/><line x1="1217.2" y1="901" x2="1217.2" y2="908.5" stroke="#f0f0f0" stroke-width="1.3"/><line x1="1238.1" y1="901" x2="1238.1" y2="908.5" stroke="#f0f0f0" stroke-width="1.3"/><line x1="1259.0" y1="901" x2="1259.0" y2="908.5" stroke="#f0f0f0" stroke-width="1.3"/><line x1="1279.9" y1="901" x2="1279.9" y2="908.5" stroke="#f0f0f0" stroke-width="1.3"/><line x1="1300.8" y1="901" x2="1300.8" y2="923" stroke="#f0f0f0" stroke-width="1.3"/><line x1="1321.7" y1="901" x2="1321.7" y2="908.5" stroke="#f0f0f0" stroke-width="1.3"/><line x1="1342.6" y1="901" x2="1342.6" y2="908.5" stroke="#f0f0f0" stroke-width="1.3"/><line x1="1363.5" y1="901" x2="1363.5" y2="908.5" stroke="#f0f0f0" stroke-width="1.3"/><line x1="1384.4" y1="901" x2="1384.4" y2="908.5" stroke="#f0f0f0" stroke-width="1.3"/><line x1="1405.3" y1="901" x2="1405.3" y2="908.5" stroke="#f0f0f0" stroke-width="1.3"/><line x1="1426.2" y1="901" x2="1426.2" y2="908.5" stroke="#f0f0f0" stroke-width="1.3"/><line x1="1447.1" y1="901" x2="1447.1" y2="923" stroke="#f0f0f0" stroke-width="1.3"/><line x1="1468.0" y1="901" x2="1468.0" y2="908.5" stroke="#f0f0f0" stroke-width="1.3"/><line x1="1488.9" y1="901" x2="1488.9" y2="908.5" stroke="#f0f0f0" stroke-width="1.3"/><line x1="1509.8" y1="901" x2="1509.8" y2="908.5" stroke="#f0f0f0" stroke-width="1.3"/><line x1="1530.7" y1="901" x2="1530.7" y2="908.5" stroke="#f0f0f0" stroke-width="1.3"/><line x1="1551.6" y1="901" x2="1551.6" y2="908.5" stroke="#f0f0f0" stroke-width="1.3"/><line x1="1572.5" y1="901" x2="1572.5" y2="908.5" stroke="#f0f0f0" stroke-width="1.3"/><line x1="1593.4" y1="901" x2="1593.4" y2="908.5" stroke="#f0f0f0" stroke-width="1.3"/><line x1="1614.2" y1="901" x2="1614.2" y2="908.5" stroke="#f0f0f0" stroke-width="1.3"/><line x1="1635.1" y1="901" x2="1635.1" y2="908.5" stroke="#f0f0f0" stroke-width="1.3"/><line x1="1656.0" y1="901" x2="1656.0" y2="908.5" stroke="#f0f0f0" stroke-width="1.3"/><line x1="1676.9" y1="901" x2="1676.9" y2="908.5" stroke="#f0f0f0" stroke-width="1.3"/><line x1="1697.8" y1="901" x2="1697.8" y2="908.5" stroke="#f0f0f0" stroke-width="1.3"/><line x1="1718.7" y1="901" x2="1718.7" y2="908.5" stroke="#f0f0f0" stroke-width="1.3"/><line x1="1739.6" y1="901" x2="1739.6" y2="923" stroke="#f0f0f0" stroke-width="1.3"/><line x1="1760.5" y1="901" x2="1760.5" y2="908.5" stroke="#f0f0f0" stroke-width="1.3"/><line x1="1781.4" y1="901" x2="1781.4" y2="908.5" stroke="#f0f0f0" stroke-width="1.3"/><line x1="1802.3" y1="901" x2="1802.3" y2="908.5" stroke="#f0f0f0" stroke-width="1.3"/><line x1="1823.2" y1="901" x2="1823.2" y2="908.5" stroke="#f0f0f0" stroke-width="1.3"/><line x1="1844.1" y1="901" x2="1844.1" y2="908.5" stroke="#f0f0f0" stroke-width="1.3"/></svg>
<div class="a" style="left:1859px;top:804px;width:61px;height:22px;background:#000;border:1.5px solid #e8e8e8;border-right:none"></div>
<div class="t" style="left:1862px;top:808px;font-size:14px;color:#10e010;letter-spacing:-0.55px;font-weight:bold">3939.030</div>
<div class="a" style="left:37px;top:941px;width:1818px;height:2px;background:#6a6a6a"></div>
<div class="a" style="left:37px;top:943px;width:1883px;height:28px;background:#f0f0f0"></div>
<div class="a" style="left:1507px;top:954px;width:135px;height:6px;background:#8a8a8a;border-radius:3px"></div>
<div class="a" style="left:1666px;top:947px;width:1px;height:18px;background:#888"></div>
<div class="a" style="left:1726px;top:947px;width:1px;height:18px;background:#888"></div>
<div class="a" style="left:1838px;top:947px;width:1px;height:18px;background:#888"></div>
<svg style="left:1673px;top:947px" width="18" height="18"><path d="M3 8A6 6 0 0 1 14 6M15 10A6 6 0 0 1 4 12" stroke="#555" stroke-width="2.5" fill="none"/><path d="M12 2L16 7L11 8Z M6 16L2 11L7 10Z" fill="#555"/></svg>
<div class="a" style="left:1701px;top:948px;width:16px;height:16px;background:#e6e6e6"></div>
<div class="a" style="left:1708px;top:952px;width:2px;height:9px;background:#444"></div>
<div class="a" style="left:1734px;top:948px;width:18px;height:18px;background:#ececec"></div>
<svg style="left:1735px;top:947px" width="18" height="18"><path d="M9 2V16M5 6L9 2L13 6M5 12L9 16L13 12" stroke="#555" stroke-width="2.2" fill="none"/></svg>
<svg style="left:1759px;top:946px" width="20" height="20"><path d="M10 1V19M1 10H19" stroke="#555" stroke-width="2.2"/><path d="M10 0L14 4H6ZM10 20L6 16H14ZM0 10L4 6V14ZM20 10L16 14V6Z" fill="#555"/></svg>
<svg style="left:1786px;top:948px" width="18" height="18"><circle cx="9" cy="9" r="7.5" fill="none" stroke="#666" stroke-width="1.3"/><path d="M5 9H13" stroke="#555" stroke-width="2"/></svg>
<svg style="left:1813px;top:948px" width="18" height="18"><circle cx="9" cy="9" r="7.5" fill="none" stroke="#666" stroke-width="1.3"/><path d="M5 9H13M9 5V13" stroke="#555" stroke-width="2"/></svg>
<div class="a" style="left:1846px;top:948px;width:18px;height:18px;background:#e8e8e8"></div>
<svg style="left:1850px;top:950px" width="12" height="14"><path d="M9 2L3 7L9 12Z" fill="#c8c8c8"/></svg>
<div class="a" style="left:1872px;top:948px;width:18px;height:18px;background:#e8e8e8"></div>
<svg style="left:1875px;top:950px" width="12" height="14"><path d="M3 2L9 7L3 12Z" fill="#c8c8c8"/></svg>
<svg style="left:1899px;top:948px" width="16" height="16"><rect x="1" y="1" width="14" height="14" fill="#f8f8f8" stroke="#555" stroke-width="1.3"/><rect x="1" y="1" width="14" height="3" fill="#555"/><path d="M4 7H12M4 10H12M4 13H12" stroke="#777"/></svg>
<div class="a" style="left:0px;top:971px;width:1920px;height:40px;background:#e9e9e9"></div>
<div class="a" style="left:0px;top:971px;width:1920px;height:1px;background:#f8f8f8"></div>
<div class="a" style="left:0px;top:1011px;width:1920px;height:1px;background:#a0a0a0"></div>
<div class="a" style="left:0px;top:1012px;width:1920px;height:2px;background:#fafafa"></div>
<div class="a" style="left:0px;top:1014px;width:1920px;height:6px;background:#414141"></div>
<div class="a" style="left:1840px;top:1017px;width:25px;height:3px;background:#fafafa"></div>
<div class="a" style="left:1870px;top:1017px;width:26px;height:3px;background:#f0f0f0"></div>
<div class="a" style="left:1px;top:975px;width:8px;height:36px;background:linear-gradient(90deg,#e0e0e0,#c0c0c0)"></div>
<div class="a" style="left:3px;top:993px;width:3px;height:3px;background:#666"></div>
<div class="a" style="left:9px;top:975px;width:1px;height:36px;background:#888"></div>
<div class="a" style="left:11px;top:981px;width:160px;height:25px;background:#fff;border:1px solid #8e8e8e;border-radius:2px"></div>
<div class="a" style="left:30px;top:993px;width:101px;height:2px;background:#333"></div>
<svg style="left:154px;top:989px" width="12" height="8"><path d="M1 1L6 6L11 1" fill="none" stroke="#555" stroke-width="1.4"/></svg>
<div class="a" style="left:174px;top:975px;width:1px;height:33px;background:#999"></div>
<div class="a" style="left:180px;top:981px;width:125px;height:25px;background:#fff;border:1px solid #8e8e8e;border-radius:2px"></div>
<div class="a" style="left:195px;top:993px;width:74px;height:2px;background:#333"></div>
<svg style="left:287px;top:989px" width="12" height="8"><path d="M1 1L6 6L11 1" fill="none" stroke="#555" stroke-width="1.4"/></svg>
<div class="a" style="left:313px;top:975px;width:1px;height:33px;background:#bbb"></div>
<div class="a" style="left:323px;top:975px;width:8px;height:36px;background:linear-gradient(90deg,#e0e0e0,#c0c0c0)"></div>
<div class="a" style="left:325px;top:993px;width:3px;height:3px;background:#666"></div>
<div class="a" style="left:331px;top:975px;width:1px;height:36px;background:#888"></div>
<div class="a" style="left:332px;top:975px;width:122px;height:36px;background:#e4e4e4"></div>
<div class="a" style="left:334px;top:980px;width:12px;height:13px;background:#e4e4f8;border:1px solid #bbb"></div>
<div class="a" style="left:349px;top:980px;width:12px;height:13px;background:#ffc400;border:1px solid #bbb"></div>
<div class="a" style="left:364px;top:980px;width:12px;height:13px;background:#ffff00;border:1px solid #bbb"></div>
<div class="a" style="left:379px;top:980px;width:12px;height:13px;background:#6a6a6a;border:1px solid #bbb"></div>
<div class="a" style="left:394px;top:980px;width:12px;height:13px;background:#33cc33;border:1px solid #bbb"></div>
<div class="a" style="left:409px;top:980px;width:12px;height:13px;background:#fffbe0;border:1px solid #bbb"></div>
<div class="a" style="left:424px;top:980px;width:12px;height:13px;background:#ff7a20;border:1px solid #bbb"></div>
<div class="a" style="left:439px;top:980px;width:12px;height:13px;background:#90f090;border:1px solid #bbb"></div>
<div class="a" style="left:334px;top:995px;width:12px;height:13px;background:#800000;border:1px solid #bbb"></div>
<div class="a" style="left:349px;top:995px;width:12px;height:13px;background:#607880;border:1px solid #bbb"></div>
<div class="a" style="left:364px;top:995px;width:12px;height:13px;background:#0000ff;border:1px solid #bbb"></div>
<div class="a" style="left:379px;top:995px;width:12px;height:13px;background:#008800;border:1px solid #bbb"></div>
<div class="a" style="left:394px;top:995px;width:12px;height:13px;background:#ff0000;border:1px solid #bbb"></div>
<div class="a" style="left:409px;top:995px;width:12px;height:13px;background:#000000;border:1px solid #bbb"></div>
<div class="a" style="left:424px;top:995px;width:12px;height:13px;background:#3a7ab8;border:1px solid #bbb"></div>
<div class="a" style="left:439px;top:995px;width:12px;height:13px;background:#90c8e0;border:1px solid #bbb"></div>
<div class="a" style="left:393px;top:978px;width:15px;height:16px;border:1px dotted #555"></div>
<svg style="left:453px;top:990px" width="10" height="6"><path d="M1 1H9L5 5Z" fill="#111"/></svg>
<div class="a" style="left:475px;top:975px;width:1px;height:33px;background:#999"></div>
<div class="a" style="left:483px;top:975px;width:8px;height:36px;background:linear-gradient(90deg,#e0e0e0,#c0c0c0)"></div>
<div class="a" style="left:485px;top:993px;width:3px;height:3px;background:#666"></div>
<div class="a" style="left:491px;top:975px;width:1px;height:36px;background:#888"></div>
<svg style="left:498.0px;top:985px" width="22" height="20"><rect x="0.5" y="2.5" width="19" height="15" rx="1.5" fill="#fdfdff" stroke="#7a9ab8" stroke-width="1"/><rect x="1.5" y="3.5" width="9" height="2" fill="#b8d0e8"/><path d="M2.5 13L6.5 9L8.5 11" stroke="#e02020" stroke-width="1.4" fill="none"/><text x="10" y="16" font-family="Liberation Sans" font-size="12" fill="#111">1</text></svg>
<svg style="left:531.8px;top:985px" width="22" height="20"><rect x="0.5" y="2.5" width="19" height="15" rx="1.5" fill="#fdfdff" stroke="#7a9ab8" stroke-width="1"/><rect x="1.5" y="3.5" width="9" height="2" fill="#b8d0e8"/><path d="M2.5 13L6.5 9L8.5 11" stroke="#e02020" stroke-width="1.4" fill="none"/><text x="10" y="16" font-family="Liberation Sans" font-size="12" fill="#111">2</text></svg>
<svg style="left:565.6px;top:985px" width="22" height="20"><rect x="0.5" y="2.5" width="19" height="15" rx="1.5" fill="#fdfdff" stroke="#7a9ab8" stroke-width="1"/><rect x="1.5" y="3.5" width="9" height="2" fill="#b8d0e8"/><path d="M2.5 13L6.5 9L8.5 11" stroke="#e02020" stroke-width="1.4" fill="none"/><text x="10" y="16" font-family="Liberation Sans" font-size="12" fill="#111">3</text></svg>
<svg style="left:599.4px;top:985px" width="22" height="20"><rect x="0.5" y="2.5" width="19" height="15" rx="1.5" fill="#fdfdff" stroke="#7a9ab8" stroke-width="1"/><rect x="1.5" y="3.5" width="9" height="2" fill="#b8d0e8"/><path d="M2.5 13L6.5 9L8.5 11" stroke="#e02020" stroke-width="1.4" fill="none"/><text x="10" y="16" font-family="Liberation Sans" font-size="12" fill="#111">4</text></svg>
<svg style="left:633.2px;top:985px" width="22" height="20"><rect x="0.5" y="2.5" width="19" height="15" rx="1.5" fill="#fdfdff" stroke="#7a9ab8" stroke-width="1"/><rect x="1.5" y="3.5" width="9" height="2" fill="#b8d0e8"/><path d="M2.5 13L6.5 9L8.5 11" stroke="#e02020" stroke-width="1.4" fill="none"/><text x="10" y="16" font-family="Liberation Sans" font-size="12" fill="#111">5</text></svg>
<svg style="left:667.0px;top:985px" width="22" height="20"><rect x="0.5" y="2.5" width="19" height="15" rx="1.5" fill="#fdfdff" stroke="#7a9ab8" stroke-width="1"/><rect x="1.5" y="3.5" width="9" height="2" fill="#b8d0e8"/><path d="M2.5 13L6.5 9L8.5 11" stroke="#e02020" stroke-width="1.4" fill="none"/><text x="10" y="16" font-family="Liberation Sans" font-size="12" fill="#111">6</text></svg>
<div class="a" style="left:702px;top:975px;width:1px;height:33px;background:#999"></div>
<div class="a" style="left:0px;top:1020px;width:1920px;height:60px;background:#242328"></div>
<svg style="left:24px;top:1034px" width="34" height="30"><circle cx="14" cy="12" r="9" fill="#f8c020"/><path d="M6 26H26A6 6 0 0 0 26 14A8 8 0 0 0 11 15A6 6 0 0 0 6 26Z" fill="#dce6f0"/></svg>
<div class="t" style="left:63px;top:1033px;font-size:14px;color:#f0f0f0;">25°C</div>
<div class="t" style="left:63px;top:1053px;font-size:14px;color:#d8d8d8;">Parc. Ensol</div>
<svg style="left:503px;top:1033px" width="34" height="34"><rect x="3" y="3" width="13.5" height="13.5" fill="#1e90e8"/><rect x="17.5" y="3" width="13.5" height="13.5" fill="#38b0f8"/><rect x="3" y="17.5" width="13.5" height="13.5" fill="#1880d8"/><rect x="17.5" y="17.5" width="13.5" height="13.5" fill="#28a0f0"/></svg>
<svg style="left:559px;top:1033px" width="34" height="34"><circle cx="19" cy="14" r="9.5" fill="none" stroke="#eee" stroke-width="2.6"/><path d="M12 21L4 29" stroke="#eee" stroke-width="3" stroke-linecap="round"/></svg>
<svg style="left:613px;top:1033px" width="34" height="34"><circle cx="17" cy="17" r="14" fill="#6a5ad0"/><path d="M5 30L9 24" stroke="#6a5ad0" stroke-width="4"/><rect x="9" y="12" width="11" height="10" rx="2" fill="#fff"/><path d="M20 15L26 12V22L20 19Z" fill="#fff"/></svg>
<svg style="left:668px;top:1033px" width="34" height="34"><rect x="10" y="4" width="20" height="26" rx="2" fill="#f4f8ff"/><rect x="3" y="8" width="17" height="18" rx="2" fill="#1a5cb8"/><text x="11.5" y="22" font-family="Liberation Sans" font-weight="bold" font-size="12" fill="#fff" text-anchor="middle">W</text><path d="M22 11H28M22 15H28M22 19H28M22 23H28" stroke="#1a5cb8" stroke-width="1.5"/></svg>
<svg style="left:723px;top:1033px" width="34" height="34"><rect x="2" y="2" width="30" height="30" rx="3" fill="#2a2a2a"/><path d="M8 28V22M13 28V16M18 28V10M23 28V5" stroke="#f07a10" stroke-width="3"/></svg>
<svg style="left:779px;top:1033px" width="34" height="34"><path d="M2 8H13L16 11H32V30H2Z" fill="#f0b818"/><rect x="2" y="13" width="30" height="17" fill="#f8cc38"/><rect x="10" y="22" width="14" height="4" fill="#1a70c8"/></svg>
<svg style="left:834px;top:1033px" width="34" height="34"><circle cx="17" cy="17" r="14" fill="#e03c28"/><path d="M17 17L29 10A14 14 0 0 1 17 31Z" fill="#f8c020"/><path d="M17 17L17 31A14 14 0 0 1 5 10Z" fill="#28a048"/><circle cx="17" cy="17" r="6.5" fill="#fff"/><circle cx="17" cy="17" r="5" fill="#3a78e8"/></svg>
<svg style="left:850px;top:1031px" width="20" height="20"><circle cx="10" cy="10" r="9" fill="#f06a18"/><text x="10" y="14.5" font-family="Liberation Sans" font-size="12" fill="#fff" text-anchor="middle">N</text></svg>
<svg style="left:889px;top:1033px" width="34" height="34"><rect x="10" y="5" width="21" height="24" rx="2" fill="#fff0e8"/><rect x="3" y="8" width="18" height="18" rx="2" fill="#d04a28"/><text x="12" y="22" font-family="Liberation Sans" font-weight="bold" font-size="13" fill="#fff" text-anchor="middle">P</text><path d="M23 12H29M23 16H29M23 20H29" stroke="#d04a28" stroke-width="1.6"/></svg>
<svg style="left:943px;top:1033px" width="34" height="34"><path d="M17 3L27 29H7Z" fill="#f07a10"/><path d="M11.5 17H22.5L24 21H10Z" fill="#fff"/><path d="M13.5 11H20.5L21.5 14H12.5Z" fill="#fff"/><rect x="4" y="28" width="26" height="4" rx="1" fill="#e06a08"/></svg>
<svg style="left:999px;top:1033px" width="34" height="34"><circle cx="17" cy="17" r="14" fill="#1a8ad8"/><path d="M6 20Q8 6 20 6Q30 7 31 17Q25 12 18 15Q12 19 18 25Q10 27 6 20Z" fill="#40d070"/><path d="M10 24Q16 30 26 27" stroke="#1060b0" stroke-width="3" fill="none"/></svg>
<svg style="left:1054px;top:1033px" width="34" height="34"><rect x="10" y="4" width="20" height="26" rx="2" fill="#f0f4ff"/><rect x="3" y="8" width="17" height="18" rx="2" fill="#3a4ab8"/><text x="11.5" y="22" font-family="Liberation Sans" font-weight="bold" font-size="13" fill="#fff" text-anchor="middle">V</text><path d="M22 12H28V22H22" stroke="#3a4ab8" stroke-width="1.6" fill="none"/></svg>
<svg style="left:1109px;top:1033px" width="34" height="34"><rect x="10" y="4" width="20" height="26" rx="2" fill="#f0fff4"/><rect x="3" y="8" width="17" height="18" rx="2" fill="#1a7a40"/><text x="11.5" y="22" font-family="Liberation Sans" font-weight="bold" font-size="13" fill="#fff" text-anchor="middle">X</text><path d="M22 11H28M22 15H28M22 19H28M22 23H28" stroke="#1a7a40" stroke-width="1.5"/></svg>
<svg style="left:1164px;top:1033px" width="34" height="34"><circle cx="17" cy="17" r="14" fill="#e03c28"/><path d="M17 17L29 10A14 14 0 0 1 17 31Z" fill="#f8c020"/><path d="M17 17L17 31A14 14 0 0 1 5 10Z" fill="#28a048"/><circle cx="17" cy="17" r="6.5" fill="#fff"/><circle cx="17" cy="17" r="5" fill="#3a78e8"/></svg>
<svg style="left:1218px;top:1033px" width="34" height="34"><rect x="6" y="2" width="22" height="30" rx="2" fill="#a8b8c8"/><rect x="9" y="5" width="16" height="6" fill="#3a8ad8"/><g fill="#4a5a6a"><rect x="9" y="14" width="4" height="3"/><rect x="15" y="14" width="4" height="3"/><rect x="21" y="14" width="4" height="3"/><rect x="9" y="20" width="4" height="3"/><rect x="15" y="20" width="4" height="3"/><rect x="21" y="20" width="4" height="8" fill="#3a8ad8"/><rect x="9" y="26" width="4" height="3"/><rect x="15" y="26" width="4" height="3"/></g></svg>
<svg style="left:1273px;top:1033px" width="34" height="34"><rect x="2" y="2" width="30" height="30" fill="#1a8a9a"/><path d="M10 28H24L22 22Q26 18 24 13L20 15L17 10L14 15L10 13Q8 18 12 22Z" fill="#fff"/><path d="M17 4V9M14.5 6.5H19.5" stroke="#fff" stroke-width="2"/></svg>
<div class="a" style="left:1318px;top:1025px;width:55px;height:50px;background:#2e2f31;border-radius:5px"></div>
<svg style="left:1328px;top:1033px" width="34" height="34"><rect x="2" y="2" width="30" height="30" rx="3" fill="#2a2a2a"/><path d="M8 28V22M13 28V16M18 28V10M23 28V5" stroke="#f07a10" stroke-width="3"/></svg>
<svg style="left:1383px;top:1033px" width="34" height="34"><rect x="4" y="6" width="26" height="24" rx="3" fill="none" stroke="#a02030" stroke-width="1.5"/><text x="17" y="25" font-family="Liberation Sans" font-size="13" fill="#a02030" text-anchor="middle">Pro</text></svg>
<div class="a" style="left:682px;top:1070px;width:8px;height:3px;background:#9a9a9a;border-radius:2px"></div>
<div class="a" style="left:847px;top:1070px;width:8px;height:3px;background:#9a9a9a;border-radius:2px"></div>
<div class="a" style="left:1122px;top:1070px;width:8px;height:3px;background:#9a9a9a;border-radius:2px"></div>
<div class="a" style="left:1397px;top:1070px;width:8px;height:3px;background:#9a9a9a;border-radius:2px"></div>
<div class="a" style="left:1336px;top:1070px;width:20px;height:3px;background:#4cc2ff;border-radius:2px"></div>
<svg style="left:1655px;top:1043px" width="20" height="12"><path d="M2 10L10 2L18 10" stroke="#f0f0f0" stroke-width="1.6" fill="none"/></svg>
<svg style="left:1683px;top:1040px" width="24" height="22"><path d="M3 16A5 5 0 0 1 6 7A6 6 0 0 1 17 8A4 4 0 0 1 18 16Z" fill="#c8c8c8"/><circle cx="16" cy="15" r="5.5" fill="#e02020"/><path d="M13.5 12.5L18.5 17.5M18.5 12.5L13.5 17.5" stroke="#fff" stroke-width="1.5"/></svg>
<svg style="left:1719px;top:1040px" width="22" height="20"><path d="M1 7A14 14 0 0 1 21 7M4 10.5A9.5 9.5 0 0 1 18 10.5M7.5 14A5 5 0 0 1 14.5 14" stroke="#f0f0f0" stroke-width="1.8" fill="none"/><circle cx="11" cy="17.5" r="1.8" fill="#f0f0f0"/></svg>
<svg style="left:1748px;top:1040px" width="22" height="20"><path d="M2 7H6L11 3V17L6 13H2Z" stroke="#f0f0f0" stroke-width="1.5" fill="none"/><path d="M14 7Q16 10 14 13M16.5 5Q20 10 16.5 15" stroke="#f0f0f0" stroke-width="1.5" fill="none"/></svg>
<svg style="left:1779px;top:1040px" width="24" height="20"><path d="M3 2V7M6 2V7M2 7H7V10L5 12V16" stroke="#f0f0f0" stroke-width="1.5" fill="none"/><rect x="8" y="6" width="12" height="9" rx="1" stroke="#f0f0f0" stroke-width="1.5" fill="none"/><rect x="20" y="9" width="2" height="3" fill="#f0f0f0"/><rect x="9.5" y="7.5" width="5" height="6" fill="#f0f0f0"/></svg>
<div class="t" style="left:1800px;width:96px;text-align:right;top:1032px;font-size:15px;color:#f0f0f0">16:25</div>
<div class="t" style="left:1800px;width:96px;text-align:right;top:1052px;font-size:15px;color:#f0f0f0">07/09/2022</div>
</body></html>
